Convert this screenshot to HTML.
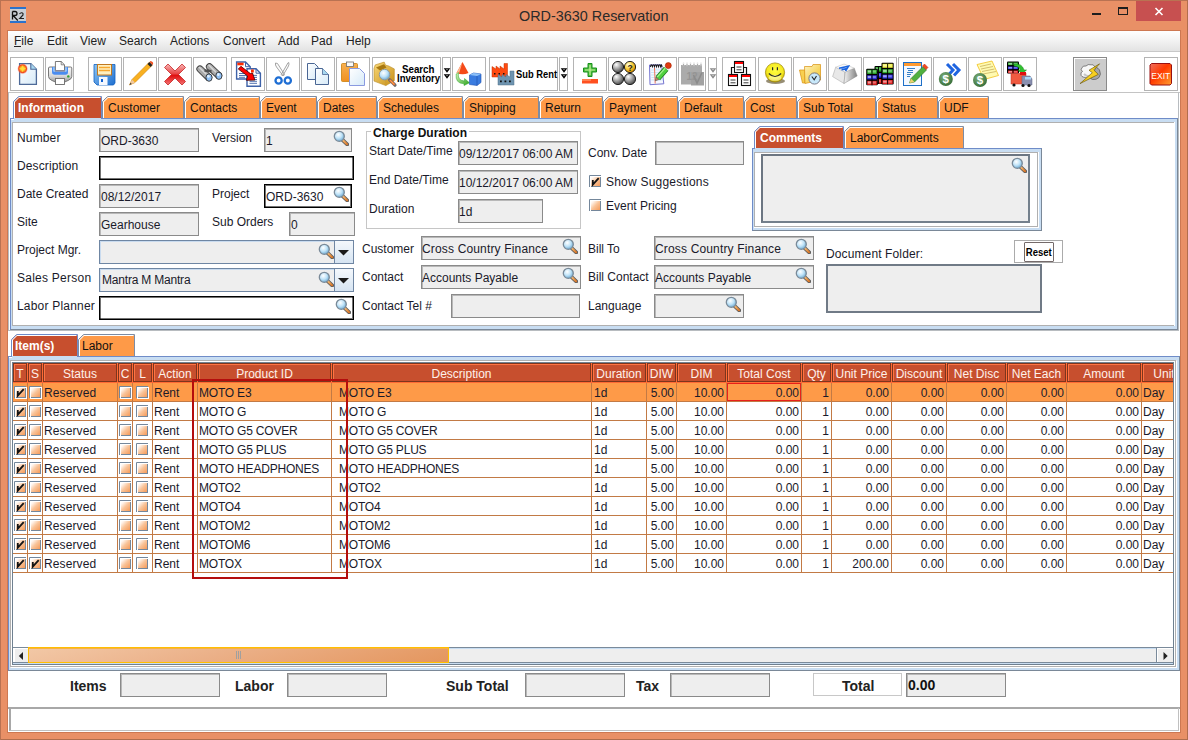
<!DOCTYPE html><html><head><meta charset="utf-8"><title>ORD-3630 Reservation</title><style>
*{box-sizing:border-box;margin:0;padding:0}
html,body{width:1188px;height:740px;overflow:hidden;background:#E99066;font-family:"Liberation Sans",sans-serif;font-size:12px;color:#1a1a2a}
.a{position:absolute}
.t{position:absolute;white-space:nowrap;line-height:14px}
.fld{position:absolute;background:#EEEEEE;border:1px solid #8A8A8A;box-shadow:inset 1px 1px 0 #B8B8B8}
.fldw{position:absolute;background:#fff;border:1px solid #000;box-shadow:inset 1px 1px 0 rgba(0,0,0,.55),inset -1px -1px 0 rgba(0,0,0,.55)}
.tb{position:absolute;top:57px;height:34px;border:1px solid #B4B4B4;background:#fff}
.tab{position:absolute;height:22px;background:#FE9A48;border:1px solid #7C98C8;border-bottom:none;clip-path:polygon(5px 0,100% 0,100% 100%,0 100%,0 5px)}
.tabs{background:#C74F2E;color:#fff;font-weight:bold}
.mag{position:absolute;width:16px;height:16px}
.cb{position:absolute;width:12px;height:12px;border:1px solid #6F7F95;background:linear-gradient(135deg,#fff 0%,#F8D2B4 45%,#F08A44 100%)}
.hd{position:absolute;top:363px;height:19px;background:#C74F2E;color:#FFEFE6;text-align:center;line-height:19px;font-size:12px;box-shadow:inset 1px 1px 0 #F07A4A,inset -1px -1px 0 #F07A4A;border-right:1px solid #A23A1E}
</style></head><body>
<svg width="0" height="0" style="position:absolute"><defs><linearGradient id="cbg" x1="0" y1="0" x2="1" y2="1"><stop offset="0" stop-color="#FFFFFF"/><stop offset="0.15" stop-color="#FFF4EC"/><stop offset="0.5" stop-color="#F9C49A"/><stop offset="1" stop-color="#F69A58"/></linearGradient></defs></svg>
<div class="a" style="left:0;top:0;width:1188px;height:1px;background:#B97252"></div>
<div class="a" style="left:0;top:739px;width:1188px;height:1px;background:#B06E4E"></div>
<div class="a" style="left:0;top:0;width:1px;height:740px;background:#B97252"></div>
<div class="a" style="left:1187px;top:0;width:1px;height:740px;background:#B06E4E"></div>
<svg class="a" style="left:10px;top:7px" width="16" height="16"><rect width="16" height="16" fill="#CACED4"/><rect width="16" height="2" fill="#2A72CC"/><rect y="14" width="16" height="2" fill="#2A72CC"/><path d="M2.5 4.5 V12.5 M2.5 4.5 H5 Q7 4.5 7 6.5 Q7 8.5 5 8.5 H3 L7.8 13.5" fill="none" stroke="#111" stroke-width="1.3"/><path d="M9.5 7 Q10.5 5.5 12 5.8 Q13.5 6.3 13 8 L9.8 11.5 H14" fill="none" stroke="#222" stroke-width="1.2"/></svg>
<div class="t" style="left:519px;top:7px;font-size:14.4px;line-height:18px;color:#2A2A2A">ORD-3630 Reservation</div>
<div class="a" style="left:1092px;top:13px;width:9px;height:2px;background:#1E1E1E"></div>
<div class="a" style="left:1118px;top:7px;width:10px;height:8px;border:1px solid #1E1E1E;border-top-width:2px"></div>
<div class="a" style="left:1136px;top:1px;width:45px;height:20px;background:#C75050"></div>
<svg class="a" style="left:1152px;top:5px" width="14" height="12"><path d="M3.5 3 L10.5 10 M10.5 3 L3.5 10" stroke="#fff" stroke-width="1.6"/></svg>
<div class="a" style="left:7px;top:30px;width:1174px;height:703px;background:#CD7852"></div>
<div class="a" style="left:8px;top:31px;width:1172px;height:701px;background:#fff"></div>
<div class="a" style="left:8px;top:31px;width:1172px;height:20px;background:linear-gradient(#FFFFFF,#F2F2F2 50%,#E3E3E3)"></div>
<div class="a" style="left:8px;top:51px;width:1172px;height:1px;background:#C8C8C8"></div>
<div class="t" style="left:14px;top:34px;font-size:12px;color:#222">File</div>
<div class="t" style="left:47px;top:34px;font-size:12px;color:#222">Edit</div>
<div class="t" style="left:80px;top:34px;font-size:12px;color:#222">View</div>
<div class="t" style="left:119px;top:34px;font-size:12px;color:#222">Search</div>
<div class="t" style="left:170px;top:34px;font-size:12px;color:#222">Actions</div>
<div class="t" style="left:223px;top:34px;font-size:12px;color:#222">Convert</div>
<div class="t" style="left:278px;top:34px;font-size:12px;color:#222">Add</div>
<div class="t" style="left:311px;top:34px;font-size:12px;color:#222">Pad</div>
<div class="t" style="left:346px;top:34px;font-size:12px;color:#222">Help</div>
<div class="a" style="left:14px;top:46px;width:7px;height:1px;background:#222"></div>
<div class="tb" style="left:10px;width:34px"></div>
<div class="tb" style="left:45px;width:29px"></div>
<div class="tb" style="left:88px;width:34px"></div>
<div class="tb" style="left:123px;width:34px"></div>
<div class="tb" style="left:158px;width:34px"></div>
<div class="tb" style="left:193px;width:34px"></div>
<div class="tb" style="left:231px;width:34px"></div>
<div class="tb" style="left:266px;width:34px"></div>
<div class="tb" style="left:301px;width:34px"></div>
<div class="tb" style="left:336px;width:34px"></div>
<div class="tb" style="left:372px;width:69px"></div>
<div class="tb" style="left:442px;width:9px"></div>
<div class="tb" style="left:452px;width:34px"></div>
<div class="tb" style="left:489px;width:69px"></div>
<div class="tb" style="left:559px;width:9px"></div>
<div class="tb" style="left:573px;width:34px"></div>
<div class="tb" style="left:608px;width:34px"></div>
<div class="tb" style="left:643px;width:34px"></div>
<div class="tb" style="left:678px;width:28px"></div>
<div class="tb" style="left:708px;width:9px"></div>
<div class="tb" style="left:722px;width:34px"></div>
<div class="tb" style="left:758px;width:34px"></div>
<div class="tb" style="left:793px;width:34px"></div>
<div class="tb" style="left:828px;width:34px"></div>
<div class="tb" style="left:863px;width:34px"></div>
<div class="tb" style="left:898px;width:34px"></div>
<div class="tb" style="left:933px;width:34px"></div>
<div class="tb" style="left:968px;width:34px"></div>
<div class="tb" style="left:1003px;width:34px"></div>
<div class="tb" style="left:1144px;width:34px"></div>
<div class="tb" style="left:1073px;width:34px;background:#CCCCCC;border-color:#8A8A8A;box-shadow:inset 1px 1px 0 #fff"></div>
<div class="a" style="left:8px;top:92px;width:1172px;height:1px;background:#C4C4C4"></div>
<svg class="a" style="left:0;top:0" width="1188" height="95" viewBox="0 0 1188 95">
<defs>
<linearGradient id="pg" x1="0" y1="0" x2="1" y2="1"><stop offset="0" stop-color="#FFFFFF"/><stop offset="1" stop-color="#D6EAF8"/></linearGradient>
<radialGradient id="sun" cx="0.5" cy="0.5" r="0.5"><stop offset="0" stop-color="#FFE040"/><stop offset="0.45" stop-color="#FFB020"/><stop offset="0.75" stop-color="#F04A20"/><stop offset="1" stop-color="#F86040" stop-opacity="0.2"/></radialGradient>
<linearGradient id="gray" x1="0" y1="0" x2="0" y2="1"><stop offset="0" stop-color="#FAFAFA"/><stop offset="0.6" stop-color="#D8D8D8"/><stop offset="1" stop-color="#9A9A9A"/></linearGradient>
<linearGradient id="blu" x1="0" y1="0" x2="1" y2="1"><stop offset="0" stop-color="#8EC6F4"/><stop offset="1" stop-color="#1E6FD0"/></linearGradient>
<linearGradient id="redx" x1="0" y1="0" x2="0" y2="1"><stop offset="0" stop-color="#F8B8B8"/><stop offset="0.45" stop-color="#E84848"/><stop offset="0.55" stop-color="#E01010"/><stop offset="1" stop-color="#F47878"/></linearGradient>
<radialGradient id="ball" cx="0.35" cy="0.3" r="0.7"><stop offset="0" stop-color="#FFFFFF"/><stop offset="0.5" stop-color="#A8A8A8"/><stop offset="1" stop-color="#505050"/></radialGradient>
<radialGradient id="ballY" cx="0.35" cy="0.3" r="0.7"><stop offset="0" stop-color="#FFFFE0"/><stop offset="0.5" stop-color="#F8D040"/><stop offset="1" stop-color="#D89000"/></radialGradient>
<radialGradient id="smile" cx="0.5" cy="0.4" r="0.6"><stop offset="0" stop-color="#FFFF40"/><stop offset="0.7" stop-color="#F4E820"/><stop offset="1" stop-color="#C0A400"/></radialGradient>
<linearGradient id="gold" x1="0" y1="0" x2="1" y2="1"><stop offset="0" stop-color="#F8D878"/><stop offset="1" stop-color="#C89018"/></linearGradient>
<linearGradient id="grn" x1="0" y1="0" x2="1" y2="1"><stop offset="0" stop-color="#D8F8C0"/><stop offset="1" stop-color="#28A018"/></linearGradient>
<radialGradient id="coin" cx="0.4" cy="0.35" r="0.65"><stop offset="0" stop-color="#7DB07D"/><stop offset="1" stop-color="#3A703A"/></radialGradient>
<linearGradient id="exitg" x1="0" y1="0" x2="1" y2="1"><stop offset="0" stop-color="#F07060"/><stop offset="0.45" stop-color="#FF3A00"/><stop offset="1" stop-color="#FFA030"/></linearGradient>
<linearGradient id="keyR" x1="0" y1="0" x2="1" y2="0"><stop offset="0" stop-color="#F4F4F4"/><stop offset="1" stop-color="#808080"/></linearGradient>
<linearGradient id="key" x1="0" y1="0" x2="1" y2="1"><stop offset="0" stop-color="#FFFFFF"/><stop offset="0.6" stop-color="#DADADA"/><stop offset="1" stop-color="#8C8C8C"/></linearGradient>
<linearGradient id="fold" x1="0" y1="0" x2="1" y2="1"><stop offset="0" stop-color="#FFF4C0"/><stop offset="1" stop-color="#F0C020"/></linearGradient>
<linearGradient id="clip" x1="0" y1="0" x2="0" y2="1"><stop offset="0" stop-color="#F8B050"/><stop offset="1" stop-color="#F09020"/></linearGradient>
</defs>
<path d="M19.6 63.6 H30.8 L36.4 69.2 V84.4 H19.6Z" fill="url(#pg)" stroke="#4E6A98" stroke-width="1.3"/>
<path d="M30.8 63.6 V69.2 H36.4" fill="#A8D8F0" stroke="#4E6A98" stroke-width="1.1"/>
<circle cx="22.6" cy="68.7" r="5.2" fill="url(#sun)"/>
<path d="M22.6 65.2 L23.6 67.6 L26.1 68.7 L23.6 69.8 L22.6 72.2 L21.6 69.8 L19.1 68.7 L21.6 67.6Z" fill="#FFE040" opacity="0.9"/>
<path d="M48.5 68 Q48.5 67 50 67 H70.5 Q71.8 67 71.8 68 V76.5 Q71.8 79 68 80.5 L64.7 82 H55.3 L52 80.5 Q48.5 79 48.5 76.5Z" fill="url(#gray)" stroke="#6A6A6A" stroke-width="0.9"/>
<path d="M52 67 H68 V72 Q68 74.8 65.5 74.8 H54.5 Q52 74.8 52 72Z" fill="#4A8CF0"/>
<path d="M53 67.2 H67 V70.5 Q67 72 65 72 H55 Q53 72 53 70.5Z" fill="#8EC0FA"/>
<path d="M55.4 61.5 H61.2 L64.5 64.8 V70.6 H55.4Z" fill="#fff" stroke="#6A6A6A" stroke-width="0.9"/>
<path d="M61.2 61.5 V64.8 H64.5" fill="none" stroke="#6A6A6A" stroke-width="0.8"/>
<rect x="55" y="70" width="10" height="1.6" fill="#8A8898"/>
<rect x="55.5" y="78.5" width="9" height="6" fill="#fff" stroke="#6A6A6A" stroke-width="0.9"/>
<circle cx="68.3" cy="76.4" r="1.2" fill="#30A030"/>
<path d="M94 64.5 H115 V83 L113.5 85 H97 L94 82Z" fill="url(#blu)" stroke="#1060C0" stroke-width="0.8"/>
<rect x="97.5" y="64.5" width="14" height="10.5" fill="#FFF0C0" stroke="#C07820" stroke-width="1"/>
<path d="M99 67.5 H110 M99 70.5 H110" stroke="#F8A830" stroke-width="1.4"/>
<rect x="99" y="77" width="8.5" height="8" fill="#F4F8FF"/>
<rect x="101" y="79" width="2" height="3" fill="#1060D0"/>
<path d="M129.5 85 L132 79.5 L149 62.5 L152 65.5 L135 82.5Z" fill="#F8B020" stroke="#D08000" stroke-width="0.6"/>
<path d="M129.5 85 L132 79.5 L135 82.5Z" fill="#F0C8A0"/><path d="M129.5 85 L130.5 82.8 L131.8 84Z" fill="#333"/>
<path d="M147.5 64 L149.5 62 L152.5 65 L150.5 67Z" fill="#222"/><path d="M149.5 62 L150.5 61 Q152 61 153 62.5 Q153.5 64 152.5 65Z" fill="#F05020"/>
<path d="M168 64 L175 71 L182 64 L185.5 67.5 L178.5 74.5 L185.5 81.5 L182 85 L175 78 L168 85 L164.5 81.5 L171.5 74.5 L164.5 67.5Z" fill="url(#redx)" stroke="#C01010" stroke-width="0.7"/>
<path d="M200 69 L208.5 77.3 M209.5 66.8 L218.5 75.3" stroke="#3A3A3A" stroke-width="7.2" stroke-linecap="round"/>
<path d="M200 69 L208.5 77.3 M209.5 66.8 L218.5 75.3" stroke="#A8A8A8" stroke-width="5.4" stroke-linecap="round"/>
<path d="M199.5 67.5 L206 74 M209 65.3 L215.5 71.8" stroke="#D8D8D8" stroke-width="1.6" stroke-linecap="round"/>
<path d="M204.5 70.5 L211.5 71.2" stroke="#505050" stroke-width="2.4"/>
<ellipse cx="209" cy="77.6" rx="3.1" ry="3.7" fill="#90C0F4" stroke="#333" stroke-width="0.9"/>
<ellipse cx="218.9" cy="75.8" rx="3.1" ry="3.6" fill="#90C0F4" stroke="#333" stroke-width="0.9"/>
<ellipse cx="208.4" cy="76.3" rx="1.3" ry="1.5" fill="#E0F0FF"/><ellipse cx="218.3" cy="74.5" rx="1.3" ry="1.5" fill="#E0F0FF"/>
<path d="M236.6 62 H245.5 L250.2 66.7 V79 H236.6Z" fill="#fff" stroke="#3E62A8" stroke-width="1.4"/>
<path d="M245.5 62 V66.7 H250.2" fill="none" stroke="#3E62A8" stroke-width="1"/>
<rect x="237.3" y="62.7" width="6.3" height="2.6" fill="#FF2A00"/>
<path d="M239 73.5 H246 M239 75.5 H246 M239 77.3 H245" stroke="#3E62A8" stroke-width="0.9"/>
<path d="M247 68.8 H256 L260.4 73.2 V86.2 H247Z" fill="#fff" stroke="#3E62A8" stroke-width="1.4"/>
<path d="M256 68.8 V73.2 H260.4" fill="none" stroke="#3E62A8" stroke-width="1"/>
<rect x="251" y="69.5" width="2.8" height="3" fill="#FF2A00"/>
<path d="M249.5 75.4 H257 M249.5 77.4 H257 M249.5 79.5 H257 M249.5 81.3 H257 M249.5 83.3 H257" stroke="#3E62A8" stroke-width="0.9"/>
<path d="M240.9 66.3 L250.4 73.6 L252.5 73 L254.9 80.1 L246.4 80.3 L247.6 76 L238.3 69.1Z" fill="#FF0000" stroke="#400000" stroke-width="0.8" stroke-linejoin="round"/>
<path d="M275.5 63 Q275 65 276.5 67 L283.3 76 L284.5 74.5 L277.5 63.5Z M288.8 62.6 Q289.5 64.5 288 67 L282.5 76 L281.3 74.5 L288 62.8Z" fill="#FBFBFB" stroke="#9A9A9A" stroke-width="0.9"/>
<circle cx="278.6" cy="80.5" r="3.1" fill="none" stroke="#1E6ED4" stroke-width="2.3"/>
<circle cx="287.8" cy="80.5" r="3.1" fill="none" stroke="#1E6ED4" stroke-width="2.3"/>
<path d="M307.5 63.5 H314.5 L318 67 V79.5 H307.5Z" fill="url(#pg)" stroke="#4A6694" stroke-width="1"/>
<path d="M315.5 68.5 H322.5 L328.5 74.5 V84.5 H315.5Z" fill="url(#pg)" stroke="#4A6694" stroke-width="1"/>
<path d="M322.5 68.5 V74.5 H328.5" fill="#A8D8F0" stroke="#4A6694" stroke-width="0.8"/>
<rect x="341.5" y="63.5" width="16" height="18" rx="1" fill="url(#clip)" stroke="#C88010" stroke-width="0.8"/>
<rect x="346.5" y="62" width="7" height="4.5" fill="#FAFAFA" stroke="#6E6E6E" stroke-width="0.8"/>
<path d="M349.5 68.5 H359.5 L364.5 73.5 V85.5 H349.5Z" fill="url(#pg)" stroke="#8A9AE0" stroke-width="1"/>
<path d="M374 68.5 L375.2 64.9 L384.2 62.1 L385.5 65.2 L388.6 65.9 L394.3 68.9 V80.7 L385.8 85.6 L374 81.1Z" fill="url(#gold)" stroke="#B88A20" stroke-width="0.6"/>
<path d="M376 67.5 L384 64.3 L386.5 67.5 L380 70.5Z" fill="#A87810"/>
<path d="M385.8 72 V85.6" stroke="#C89830" stroke-width="0.6"/>
<path d="M389.5 79.6 L395 85.2" stroke="#6E6E6E" stroke-width="3.2" stroke-linecap="round"/><path d="M389.8 79.9 L394.6 84.8" stroke="#F46A30" stroke-width="2"/><path d="M390.2 80.3 L394.2 84.4" stroke="#F8D060" stroke-width="0.7"/>
<circle cx="384.6" cy="74.6" r="5.3" fill="url(#lens)" stroke="#8A96A0" stroke-width="0.9"/>
<text x="402" y="72.5" font-family="Liberation Sans" font-weight="bold" font-size="11" fill="#000" textLength="32.5" lengthAdjust="spacingAndGlyphs">Search</text>
<text x="397" y="82" font-family="Liberation Sans" font-weight="bold" font-size="11" fill="#000" textLength="43" lengthAdjust="spacingAndGlyphs">Inventory</text>
<path d="M443.7 68.3 H450.3 L447 72.8Z M443.7 74.3 H450.3 L447 78.8Z" fill="#000"/><path d="M446.5 69.6 H447.5 M446.5 75.6 H447.5" stroke="#fff" stroke-width="0.9"/>
<path d="M462.5 62 L468.5 73 Q462.5 75.5 456.5 73Z" fill="#F44A1A"/><path d="M462.5 62 L459 73.5 Q457 73.5 456.5 73Z" fill="#FFB890"/>
<path d="M458.5 72.5 Q457 80.5 464.5 81 L464.5 78.5 L469.5 82.8 L464 85.5 L464 83.8 Q455 83.5 456.2 74Z" fill="url(#grn)" stroke="#28A028" stroke-width="0.5"/>
<path d="M469.5 75 L473.5 73 L481 74 V82.5 L477 85.5 L469.5 84.5Z" fill="#3A7CE0" stroke="#2050B0" stroke-width="0.6"/>
<path d="M469.5 75 L473.5 73 L481 74 L477 76Z" fill="#8CC0F8"/><path d="M477 76 V85.5" stroke="#1C4CA8" stroke-width="0.6"/>
<path d="M492 66.5 L496 69 V66 L500 69 V66 L504 69 V63.5 H507.5 V77 H492Z" fill="#FF4A10" stroke="#C03000" stroke-width="0.5"/>
<path d="M494 73 h1.5 v1.5 h-1.5z M498.5 73 h1.5 v1.5 h-1.5z M503 73 h1.5 v1.5 h-1.5z" fill="#111"/>
<path d="M498 74.5 L502 77 V74.5 L506 77 V74.5 L510 77 V71 H514 V85 H498Z" fill="#6E94B0" stroke="#50708A" stroke-width="0.5"/>
<path d="M500 80.5 h1.8 v1.8 h-1.8z M504.5 80.5 h1.8 v1.8 h-1.8z M509 80.5 h1.8 v1.8 h-1.8z" fill="#111"/>
<text x="516" y="77.8" font-family="Liberation Sans" font-weight="bold" font-size="11" fill="#000" textLength="41" lengthAdjust="spacingAndGlyphs">Sub Rent</text>
<path d="M560.7 68.3 H567.3 L564 72.8Z M560.7 74.3 H567.3 L564 78.8Z" fill="#000"/><path d="M563.5 69.6 H564.5 M563.5 75.6 H564.5" stroke="#fff" stroke-width="0.9"/>
<path d="M588 63.5 H592 V68 H596.5 V72 H592 V76.5 H588 V72 H583.5 V68 H588Z" fill="#50C040" stroke="#18901C" stroke-width="1"/>
<path d="M590 65 V75 M585 70 H595" stroke="#C8F0A0" stroke-width="1.2"/>
<rect x="582" y="79" width="16" height="4.5" fill="#FF5020"/><rect x="582" y="79" width="9" height="2" fill="#FF8050"/>
<circle cx="618" cy="67" r="5.6" fill="url(#ball)" stroke="#111" stroke-width="0.9"/>
<circle cx="630" cy="67" r="5.6" fill="url(#ballY)" stroke="#111" stroke-width="0.9"/>
<circle cx="618" cy="79" r="5.6" fill="url(#ball)" stroke="#111" stroke-width="0.9"/>
<circle cx="630" cy="79" r="5.6" fill="url(#ball)" stroke="#111" stroke-width="0.9"/>
<text x="630" y="70.5" text-anchor="middle" font-family="Liberation Sans" font-weight="bold" font-size="8.5" fill="#222">?</text>
<path d="M649.5 65 L661.5 64.8 L663.8 83.8 L650 84.7Z" fill="#F6F8FF" stroke="#7474D0" stroke-width="1"/>
<path d="M651 70 L662 69.8 M651 72.5 L662.3 72.3 M651 75 L662.6 74.8 M651.3 77.5 L662.9 77.3 M651.3 80 L663.2 79.8" stroke="#B8E0F4" stroke-width="0.7"/>
<path d="M654.5 68 L655.2 83.5" stroke="#F06848" stroke-width="0.9"/>
<path d="M650.5 67 Q651 63 652.5 66.5 Q653.5 63 654.5 66.5 Q655.5 63 656.5 66.5 Q657.5 63 658.5 66.5 Q659.5 63 660.5 66.5 Q661.5 63 662 67" fill="none" stroke="#1A1A1A" stroke-width="1.1"/>
<path d="M657.8 78.2 L666.2 68.8" stroke="#1E7A1E" stroke-width="6" stroke-linecap="butt"/>
<path d="M657.8 78.2 L666.2 68.8" stroke="#50D040" stroke-width="4.4"/>
<path d="M657.2 77.2 L665.2 68.2" stroke="#A8F090" stroke-width="1.2"/>
<path d="M655.4 80.8 L656 77 L658.8 79.6Z" fill="#C89060" stroke="#333" stroke-width="0.5"/>
<path d="M666 68.6 L667.6 67" stroke="#E8E8E8" stroke-width="5"/>
<circle cx="668.3" cy="65.6" r="3" fill="#E03A10" stroke="#A02000" stroke-width="0.6"/>
<path d="M681 65 H702 V84.5 H681Z" fill="#ABABAB"/>
<rect x="691" y="72" width="13" height="13.5" fill="#A2A2A2"/>
<path d="M683.5 65.5 V63 M687 65.5 V63 M690.5 65.5 V63 M694 65.5 V63 M697.5 65.5 V63 M701 65.5 V63" stroke="#E4E4E4" stroke-width="1.5" stroke-linecap="round"/>
<path d="M683.5 66 V64 M687 66 V64 M690.5 66 V64 M694 66 V64 M697.5 66 V64 M701 66 V64" stroke="#8A8A8A" stroke-width="0.6"/>
<text x="692" y="79.5" text-anchor="middle" font-family="Liberation Sans" font-weight="bold" font-size="10" fill="#959595">12</text>
<path d="M693.5 75 L697 83 L702 72.5" stroke="#8C8C8C" stroke-width="1.6" fill="none"/>
<path d="M709.7 68.3 H716.3 L713 72.8Z M709.7 74.3 H716.3 L713 78.8Z" fill="#8A8A8A"/><path d="M712.5 69.6 H713.5 M712.5 75.6 H713.5" stroke="#fff" stroke-width="0.9"/>
<path d="M731.5 74 V67.5 H746.5 V74" fill="none" stroke="#111" stroke-width="1.2"/>
<rect x="734.5" y="61.5" width="9" height="11" fill="#fff" stroke="#111" stroke-width="1.1"/>
<rect x="735.0" y="62.0" width="8" height="2" fill="#FF0000"/>
<path d="M736.5 67.0 H741.5 M736.5 69.8 H741.5" stroke="#222" stroke-width="0.9"/>
<rect x="728.5" y="74.5" width="9" height="11" fill="#fff" stroke="#111" stroke-width="1.1"/>
<rect x="729.0" y="75.0" width="8" height="2" fill="#FF0000"/>
<path d="M730.5 80.0 H735.5 M730.5 82.8 H735.5" stroke="#222" stroke-width="0.9"/>
<rect x="741.5" y="74.5" width="9" height="11" fill="#fff" stroke="#111" stroke-width="1.1"/>
<rect x="742.0" y="75.0" width="8" height="2" fill="#FF0000"/>
<path d="M743.5 80.0 H748.5 M743.5 82.8 H748.5" stroke="#222" stroke-width="0.9"/>
<ellipse cx="775.5" cy="81" rx="9.5" ry="3" fill="#403000" opacity="0.55"/>
<circle cx="775" cy="72.5" r="9.6" fill="url(#smile)" stroke="#9A8400" stroke-width="0.7"/>
<ellipse cx="775" cy="77.8" rx="6.5" ry="3" fill="#FFFFD0" opacity="0.55"/>
<path d="M772.6 67.3 V70.3 M777.4 67.3 V70.3" stroke="#2A2A2A" stroke-width="1.2"/>
<path d="M768.8 73.5 Q775 79.5 781.2 73.5" fill="none" stroke="#2A2A2A" stroke-width="1.1"/>
<path d="M799.5 70 H805 V83 L802.5 83Z" fill="#F8D050" stroke="#D89010" stroke-width="0.7"/>
<path d="M804.5 66.5 H812 L813 64.5 H820.5 V80 L805 83.5Z" fill="url(#fold)" stroke="#D89010" stroke-width="0.7"/>
<circle cx="814.5" cy="78.5" r="5.6" fill="#C8E8FA" stroke="#6E6E7E" stroke-width="0.9"/>
<path d="M811.8 76.5 L814.2 79.8 L816.5 76" fill="none" stroke="#222" stroke-width="1.1"/>
<path d="M835.7 67.2 L832.6 76.6 L844 83.5 L845.1 72.1Z" fill="#E8E8E8" stroke="#A0A0A0" stroke-width="0.5"/>
<path d="M845.1 72.1 L844 83.5 L857.2 75.9 L854.2 68.1Z" fill="url(#keyR)" stroke="#8A8A8A" stroke-width="0.5"/>
<path d="M835.7 67.2 L844 64 L854.2 68.1 L845.1 72.1Z" fill="#FAFAFA" stroke="#B8B8B8" stroke-width="0.5"/>
<path d="M839 68.3 L848.5 66.2 L845.5 71 M841.5 69.6 L847.5 68.6" fill="none" stroke="#1A64E0" stroke-width="1.6"/>
<rect x="874.5" y="66" width="8" height="18" rx="1" fill="#000"/><rect x="875.5" y="67" width="6" height="4.6" fill="#28A828"/><rect x="876.1" y="67.6" width="1.5" height="2.4" fill="#fff" opacity="0.55"/><rect x="879.1" y="67.6" width="1.5" height="2.4" fill="#fff" opacity="0.35"/><rect x="875.5" y="73" width="6" height="4.6" fill="#2828E8"/><rect x="876.1" y="73.6" width="1.5" height="2.4" fill="#fff" opacity="0.55"/><rect x="879.1" y="73.6" width="1.5" height="2.4" fill="#fff" opacity="0.35"/><rect x="875.5" y="79" width="6" height="4.6" fill="#E02020"/><rect x="876.1" y="79.6" width="1.5" height="2.4" fill="#fff" opacity="0.55"/><rect x="879.1" y="79.6" width="1.5" height="2.4" fill="#fff" opacity="0.35"/><path d="M878.5 67 V84" stroke="#000" stroke-width="0.9"/>
<rect x="881.5" y="62.8" width="12.2" height="21.6" rx="1" fill="#000"/><rect x="882.5" y="63.8" width="10.2" height="4.0" fill="#F0F040"/><rect x="883.1" y="64.39999999999999" width="3.5999999999999996" height="2.1" fill="#fff" opacity="0.55"/><rect x="888.2" y="64.39999999999999" width="3.5999999999999996" height="2.1" fill="#fff" opacity="0.35"/><rect x="882.5" y="69.2" width="10.2" height="4.0" fill="#30B030"/><rect x="883.1" y="69.8" width="3.5999999999999996" height="2.1" fill="#fff" opacity="0.55"/><rect x="888.2" y="69.8" width="3.5999999999999996" height="2.1" fill="#fff" opacity="0.35"/><rect x="882.5" y="74.6" width="10.2" height="4.0" fill="#3030E0"/><rect x="883.1" y="75.19999999999999" width="3.5999999999999996" height="2.1" fill="#fff" opacity="0.55"/><rect x="888.2" y="75.19999999999999" width="3.5999999999999996" height="2.1" fill="#fff" opacity="0.35"/><rect x="882.5" y="80.0" width="10.2" height="4.0" fill="#E02020"/><rect x="883.1" y="80.6" width="3.5999999999999996" height="2.1" fill="#fff" opacity="0.55"/><rect x="888.2" y="80.6" width="3.5999999999999996" height="2.1" fill="#fff" opacity="0.35"/><path d="M887.6 63.8 V84.4" stroke="#000" stroke-width="0.9"/>
<rect x="866.2" y="68.8" width="11.6" height="16.5" rx="1" fill="#000"/><rect x="867.2" y="69.8" width="9.6" height="4.1" fill="#30B030"/><rect x="867.8000000000001" y="70.39999999999999" width="3.3" height="2.15" fill="#fff" opacity="0.55"/><rect x="872.6" y="70.39999999999999" width="3.3" height="2.15" fill="#fff" opacity="0.35"/><rect x="867.2" y="75.3" width="9.6" height="4.1" fill="#3030E0"/><rect x="867.8000000000001" y="75.89999999999999" width="3.3" height="2.15" fill="#fff" opacity="0.55"/><rect x="872.6" y="75.89999999999999" width="3.3" height="2.15" fill="#fff" opacity="0.35"/><rect x="867.2" y="80.8" width="9.6" height="4.1" fill="#E02020"/><rect x="867.8000000000001" y="81.39999999999999" width="3.3" height="2.15" fill="#fff" opacity="0.55"/><rect x="872.6" y="81.39999999999999" width="3.3" height="2.15" fill="#fff" opacity="0.35"/><path d="M872.0 69.8 V85.3" stroke="#000" stroke-width="0.9"/>
<rect x="903.5" y="62.5" width="18" height="23" fill="#F4F8FF" stroke="#1E70C8" stroke-width="1"/>
<rect x="904" y="63" width="17" height="3" fill="#FF9A30"/>
<path d="M907 68.5 H915 M908 70.5 H913 M907 72.5 H913 M907 74.5 H911 M907 76.5 H910" stroke="#2070C0" stroke-width="0.9"/>
<path d="M909.5 83 L911 78.5 L923 66.5 L926.5 70 L914.5 82Z" fill="#50B040" stroke="#287020" stroke-width="0.6"/>
<path d="M909.5 83 L911 78.5 L914.5 82Z" fill="#F0D070"/><path d="M922.5 66 L924.5 64 L928 67.5 L926 69.5Z" fill="#F04A20" stroke="#C02000" stroke-width="0.5"/>
<path d="M947 64 L953 70 L948 75.5 M953 64 L959 70 L954 75.5" fill="none" stroke="#1E64E0" stroke-width="3"/>
<circle cx="945.8" cy="79" r="7" fill="url(#coin)"/><text x="945.8" y="83.2" text-anchor="middle" font-family="Liberation Sans" font-weight="bold" font-size="11.5" fill="#fff">$</text>
<path d="M977 64.5 L992 61 L998.5 75.5 L984 79.5Z" fill="#FFFAB0" stroke="#F0C020" stroke-width="0.8"/>
<path d="M980 66.5 L991 64 M981 69 L993 66.5 M982 71.5 L994.5 69 M983 74 L996 71.5" stroke="#C8B060" stroke-width="0.8"/>
<circle cx="980" cy="80" r="7" fill="url(#coin)"/><text x="980" y="84.2" text-anchor="middle" font-family="Liberation Sans" font-weight="bold" font-size="11.5" fill="#fff">$</text>
<rect x="1007" y="61.5" width="12" height="12" rx="1" fill="#000"/><rect x="1008" y="62.5" width="10" height="2.6" fill="#30B030"/><rect x="1008.6" y="63.1" width="3.5" height="1.4" fill="#fff" opacity="0.55"/><rect x="1013.6" y="63.1" width="3.5" height="1.4" fill="#fff" opacity="0.35"/><rect x="1008" y="66.5" width="10" height="2.6" fill="#3030E0"/><rect x="1008.6" y="67.1" width="3.5" height="1.4" fill="#fff" opacity="0.55"/><rect x="1013.6" y="67.1" width="3.5" height="1.4" fill="#fff" opacity="0.35"/><rect x="1008" y="70.5" width="10" height="2.6" fill="#E02020"/><rect x="1008.6" y="71.1" width="3.5" height="1.4" fill="#fff" opacity="0.55"/><rect x="1013.6" y="71.1" width="3.5" height="1.4" fill="#fff" opacity="0.35"/><path d="M1013.0 62.5 V73.5" stroke="#000" stroke-width="0.9"/>
<path d="M1014 64 Q1022 63 1024 70 L1026.5 70 L1022 74 L1018 70 L1020.5 70 Q1019 66 1014 66Z" fill="#30C030" stroke="#108010" stroke-width="0.5"/>
<rect x="1011" y="73.5" width="15" height="10.5" fill="#F05A40" stroke="#C03020" stroke-width="0.5"/>
<rect x="1020" y="72" width="6" height="3" fill="#E01010"/>
<path d="M1022 76 H1030 L1032 79 V85 H1022Z" fill="#8A90B0" stroke="#5A6080" stroke-width="0.5"/><rect x="1025" y="77" width="6" height="2.5" fill="#A8D8F8"/>
<circle cx="1014" cy="85" r="1.6" fill="#111"/><circle cx="1023" cy="85.5" r="1.6" fill="#111"/><circle cx="1029" cy="85.5" r="1.6" fill="#111"/>
<path d="M1092 68 Q1097 66 1099.5 70 Q1101.5 74.5 1099 77.5 Q1096.5 80 1092.5 79.5 Q1090 79 1090 76Z" fill="#A8A8A8" stroke="#505050" stroke-width="0.7"/>
<path d="M1082.5 71.5 Q1080 70 1082 67.5 Q1083.5 65.5 1086 66 Q1088 63.8 1091 64.8 Q1093.5 64 1094.5 66.5 Q1096 69 1094 72 Q1095 76.5 1091 77.5 Q1088 79.5 1085.5 77.5 Q1080.5 77 1081 74 Q1080.5 72.5 1082.5 71.5Z" fill="#F8F8F8" stroke="#555" stroke-width="0.7"/>
<path d="M1084 74 Q1088 78 1093 75" fill="none" stroke="#C8C8C8" stroke-width="2"/>
<path d="M1099.6 63.8 L1093.8 70 L1098.3 74.4 L1080 83.6 L1092.3 72.7 L1089 70.2Z" fill="#F8D020" stroke="#5A4A00" stroke-width="0.6" stroke-linejoin="round"/>
<path d="M1151.5 63.5 H1170 L1171.5 65 V83.5 L1170 85 H1151.5 L1150 83.5 V65Z" fill="url(#exitg)" stroke="#9A1010" stroke-width="1"/>
<text x="1160.8" y="78.5" text-anchor="middle" font-family="Liberation Sans" font-size="9.5" fill="#fff" textLength="19" lengthAdjust="spacingAndGlyphs">EXIT</text>
</svg>
<div class="a" style="left:8px;top:92px;width:1171px;height:239px;border:1px solid #B8BCC0;border-top-color:#C4C4C4;background:#fff"></div>
<svg class="a" style="left:13px;top:96px" width="89" height="23"><path d="M1 23 V6 L6 1 H88 V23Z" fill="#C74F2E"/><path d="M1.5 23 V6 L6 1.5 H87.5" fill="none" stroke="#fff" stroke-width="1"/><path d="M0.5 23 V5.5 L5.5 0.5 H88.5 V23" fill="none" stroke="#6F8CC8" stroke-width="1"/></svg><div class="t" style="left:18px;top:101px;color:#fff;font-weight:bold">Information</div>
<svg class="a" style="left:102px;top:96px" width="82" height="23"><path d="M1 23 V6 L6 1 H81 V23Z" fill="#FE9A48"/><path d="M1.5 23 V6 L6 1.5 H80.5" fill="none" stroke="#fff" stroke-width="1"/><path d="M0.5 23 V5.5 L5.5 0.5 H81.5 V23" fill="none" stroke="#7D8CA4" stroke-width="1"/></svg><div class="t" style="left:108px;top:101px;color:#111;font-weight:normal">Customer</div>
<svg class="a" style="left:184px;top:96px" width="76" height="23"><path d="M1 23 V6 L6 1 H75 V23Z" fill="#FE9A48"/><path d="M1.5 23 V6 L6 1.5 H74.5" fill="none" stroke="#fff" stroke-width="1"/><path d="M0.5 23 V5.5 L5.5 0.5 H75.5 V23" fill="none" stroke="#7D8CA4" stroke-width="1"/></svg><div class="t" style="left:190px;top:101px;color:#111;font-weight:normal">Contacts</div>
<svg class="a" style="left:260px;top:96px" width="57" height="23"><path d="M1 23 V6 L6 1 H56 V23Z" fill="#FE9A48"/><path d="M1.5 23 V6 L6 1.5 H55.5" fill="none" stroke="#fff" stroke-width="1"/><path d="M0.5 23 V5.5 L5.5 0.5 H56.5 V23" fill="none" stroke="#7D8CA4" stroke-width="1"/></svg><div class="t" style="left:266px;top:101px;color:#111;font-weight:normal">Event</div>
<svg class="a" style="left:317px;top:96px" width="60" height="23"><path d="M1 23 V6 L6 1 H59 V23Z" fill="#FE9A48"/><path d="M1.5 23 V6 L6 1.5 H58.5" fill="none" stroke="#fff" stroke-width="1"/><path d="M0.5 23 V5.5 L5.5 0.5 H59.5 V23" fill="none" stroke="#7D8CA4" stroke-width="1"/></svg><div class="t" style="left:323px;top:101px;color:#111;font-weight:normal">Dates</div>
<svg class="a" style="left:377px;top:96px" width="86" height="23"><path d="M1 23 V6 L6 1 H85 V23Z" fill="#FE9A48"/><path d="M1.5 23 V6 L6 1.5 H84.5" fill="none" stroke="#fff" stroke-width="1"/><path d="M0.5 23 V5.5 L5.5 0.5 H85.5 V23" fill="none" stroke="#7D8CA4" stroke-width="1"/></svg><div class="t" style="left:383px;top:101px;color:#111;font-weight:normal">Schedules</div>
<svg class="a" style="left:463px;top:96px" width="76" height="23"><path d="M1 23 V6 L6 1 H75 V23Z" fill="#FE9A48"/><path d="M1.5 23 V6 L6 1.5 H74.5" fill="none" stroke="#fff" stroke-width="1"/><path d="M0.5 23 V5.5 L5.5 0.5 H75.5 V23" fill="none" stroke="#7D8CA4" stroke-width="1"/></svg><div class="t" style="left:469px;top:101px;color:#111;font-weight:normal">Shipping</div>
<svg class="a" style="left:539px;top:96px" width="64" height="23"><path d="M1 23 V6 L6 1 H63 V23Z" fill="#FE9A48"/><path d="M1.5 23 V6 L6 1.5 H62.5" fill="none" stroke="#fff" stroke-width="1"/><path d="M0.5 23 V5.5 L5.5 0.5 H63.5 V23" fill="none" stroke="#7D8CA4" stroke-width="1"/></svg><div class="t" style="left:545px;top:101px;color:#111;font-weight:normal">Return</div>
<svg class="a" style="left:603px;top:96px" width="75" height="23"><path d="M1 23 V6 L6 1 H74 V23Z" fill="#FE9A48"/><path d="M1.5 23 V6 L6 1.5 H73.5" fill="none" stroke="#fff" stroke-width="1"/><path d="M0.5 23 V5.5 L5.5 0.5 H74.5 V23" fill="none" stroke="#7D8CA4" stroke-width="1"/></svg><div class="t" style="left:609px;top:101px;color:#111;font-weight:normal">Payment</div>
<svg class="a" style="left:678px;top:96px" width="66" height="23"><path d="M1 23 V6 L6 1 H65 V23Z" fill="#FE9A48"/><path d="M1.5 23 V6 L6 1.5 H64.5" fill="none" stroke="#fff" stroke-width="1"/><path d="M0.5 23 V5.5 L5.5 0.5 H65.5 V23" fill="none" stroke="#7D8CA4" stroke-width="1"/></svg><div class="t" style="left:684px;top:101px;color:#111;font-weight:normal">Default</div>
<svg class="a" style="left:744px;top:96px" width="53" height="23"><path d="M1 23 V6 L6 1 H52 V23Z" fill="#FE9A48"/><path d="M1.5 23 V6 L6 1.5 H51.5" fill="none" stroke="#fff" stroke-width="1"/><path d="M0.5 23 V5.5 L5.5 0.5 H52.5 V23" fill="none" stroke="#7D8CA4" stroke-width="1"/></svg><div class="t" style="left:750px;top:101px;color:#111;font-weight:normal">Cost</div>
<svg class="a" style="left:797px;top:96px" width="79" height="23"><path d="M1 23 V6 L6 1 H78 V23Z" fill="#FE9A48"/><path d="M1.5 23 V6 L6 1.5 H77.5" fill="none" stroke="#fff" stroke-width="1"/><path d="M0.5 23 V5.5 L5.5 0.5 H78.5 V23" fill="none" stroke="#7D8CA4" stroke-width="1"/></svg><div class="t" style="left:803px;top:101px;color:#111;font-weight:normal">Sub Total</div>
<svg class="a" style="left:876px;top:96px" width="62" height="23"><path d="M1 23 V6 L6 1 H61 V23Z" fill="#FE9A48"/><path d="M1.5 23 V6 L6 1.5 H60.5" fill="none" stroke="#fff" stroke-width="1"/><path d="M0.5 23 V5.5 L5.5 0.5 H61.5 V23" fill="none" stroke="#7D8CA4" stroke-width="1"/></svg><div class="t" style="left:882px;top:101px;color:#111;font-weight:normal">Status</div>
<svg class="a" style="left:938px;top:96px" width="51" height="23"><path d="M1 23 V6 L6 1 H50 V23Z" fill="#FE9A48"/><path d="M1.5 23 V6 L6 1.5 H49.5" fill="none" stroke="#fff" stroke-width="1"/><path d="M0.5 23 V5.5 L5.5 0.5 H50.5 V23" fill="none" stroke="#7D8CA4" stroke-width="1"/></svg><div class="t" style="left:944px;top:101px;color:#111;font-weight:normal">UDF</div>
<div class="a" style="left:10px;top:118px;width:1168px;height:212px;background:#C8DDF2;border:1px solid #6F8CC8;border-right-color:#7A8898;border-bottom-color:#7A8898"></div>
<div class="a" style="left:12px;top:122px;width:1163px;height:204px;background:#fff;border:1px solid #B0B0B0;border-right-color:#B0B0B0"></div>
<div class="a" style="left:1174px;top:122px;width:1px;height:204px;background:#fff"></div>
<div class="a" style="left:101px;top:118px;width:1px;height:1px;background:#6F8CC8"></div>
<div class="a" style="left:14px;top:118px;width:87px;height:1px;background:#C8DDF2"></div>
<div class="a" style="left:11px;top:119px;width:3px;height:1px;background:#fff"></div>
<svg width="0" height="0" style="position:absolute"><defs>
<radialGradient id="lens" cx="0.4" cy="0.35" r="0.6"><stop offset="0" stop-color="#FFFFFF"/><stop offset="0.6" stop-color="#BFE3F8"/><stop offset="1" stop-color="#7FB6DA"/></radialGradient>
<linearGradient id="hdl" x1="0" y1="0" x2="1" y2="1"><stop offset="0" stop-color="#F9C17A"/><stop offset="1" stop-color="#D9782A"/></linearGradient>
<symbol id="mag" viewBox="0 0 16 16"><path d="M9.2 9.6 L14.2 14.4" stroke="#5E5E5E" stroke-width="3.8" stroke-linecap="round"/><path d="M9.4 9.8 L14 14.2" stroke="url(#hdl)" stroke-width="2.2" stroke-linecap="round"/><circle cx="6.3" cy="6.3" r="5" fill="url(#lens)" stroke="#7A8A98" stroke-width="1.3"/></symbol>
</defs></svg>
<div class="t" style="left:17px;top:131px;letter-spacing:0.15px">Number</div>
<div class="t" style="left:17px;top:159px;letter-spacing:0.12px">Description</div>
<div class="t" style="left:17px;top:187px;">Date Created</div>
<div class="t" style="left:17px;top:215px;">Site</div>
<div class="t" style="left:17px;top:243px;">Project Mgr.</div>
<div class="t" style="left:17px;top:271px;letter-spacing:0.25px">Sales Person</div>
<div class="t" style="left:17px;top:299px;letter-spacing:0.2px">Labor Planner</div>
<div class="t" style="left:212px;top:131px;">Version</div>
<div class="t" style="left:212px;top:187px;">Project</div>
<div class="t" style="left:212px;top:215px;">Sub Orders</div>
<div class="fld" style="left:99px;top:128px;width:100px;height:24px;"></div>
<div class="t" style="left:101px;top:134px;">ORD-3630</div>
<div class="fldw" style="left:99px;top:156px;width:255px;height:24px;"></div>
<div class="fld" style="left:99px;top:184px;width:100px;height:24px;"></div>
<div class="t" style="left:101px;top:190px;">08/12/2017</div>
<div class="fld" style="left:99px;top:212px;width:100px;height:24px;"></div>
<div class="t" style="left:101px;top:218px;">Gearhouse</div>
<div class="fld" style="left:264px;top:128px;width:88px;height:24px;"></div>
<div class="t" style="left:266px;top:134px;">1</div>
<svg class="mag" style="left:333px;top:130px" width="16" height="16"><use href="#mag"/></svg>
<div class="fldw" style="left:264px;top:184px;width:88px;height:24px;"></div>
<div class="t" style="left:266px;top:190px;">ORD-3630</div>
<svg class="mag" style="left:333px;top:186px" width="16" height="16"><use href="#mag"/></svg>
<div class="fld" style="left:289px;top:212px;width:66px;height:24px;"></div>
<div class="t" style="left:291px;top:218px;">0</div>
<div class="a" style="left:99px;top:240px;width:255px;height:24px;background:#EEEEEE;border:1px solid #6F86A3;box-shadow:inset 1px 1px 0 #C9DBEF"></div>
<div class="a" style="left:334px;top:240px;width:20px;height:24px;border:1px solid #6F86A3;background:linear-gradient(#F4F8FC,#D6E4F2)"></div>
<svg class="a" style="left:338px;top:250px" width="11" height="6"><path d="M0 0 H11 L5.5 5.5Z" fill="#1A1A1A"/></svg>
<svg class="mag" style="left:318px;top:243px" width="16" height="16"><use href="#mag"/></svg>
<div class="a" style="left:99px;top:268px;width:255px;height:24px;background:#EEEEEE;border:1px solid #6F86A3;box-shadow:inset 1px 1px 0 #C9DBEF"></div>
<div class="a" style="left:334px;top:268px;width:20px;height:24px;border:1px solid #6F86A3;background:linear-gradient(#F4F8FC,#D6E4F2)"></div>
<svg class="a" style="left:338px;top:278px" width="11" height="6"><path d="M0 0 H11 L5.5 5.5Z" fill="#1A1A1A"/></svg>
<svg class="mag" style="left:318px;top:271px" width="16" height="16"><use href="#mag"/></svg>
<div class="t" style="left:102px;top:273px;letter-spacing:-0.2px">Mantra M Mantra</div>
<div class="fldw" style="left:99px;top:296px;width:255px;height:24px;"></div>
<svg class="mag" style="left:335px;top:298px" width="16" height="16"><use href="#mag"/></svg>
<div class="a" style="left:366px;top:131px;width:215px;height:98px;border:1px solid #C6C6C6"></div>
<div class="t" style="left:371px;top:126px;padding:0 2px;background:#fff;font-weight:bold;color:#111">Charge Duration</div>
<div class="t" style="left:369px;top:144px;">Start Date/Time</div>
<div class="t" style="left:369px;top:173px;">End Date/Time</div>
<div class="t" style="left:369px;top:202px;">Duration</div>
<div class="fld" style="left:458px;top:141px;width:120px;height:24px;"></div>
<div class="t" style="left:459px;top:147px;">09/12/2017 06:00 AM</div>
<div class="fld" style="left:458px;top:170px;width:120px;height:24px;"></div>
<div class="t" style="left:459px;top:176px;">10/12/2017 06:00 AM</div>
<div class="fld" style="left:458px;top:199px;width:85px;height:24px;"></div>
<div class="t" style="left:459px;top:205px;">1d</div>
<div class="t" style="left:588px;top:146px;">Conv. Date</div>
<div class="fld" style="left:655px;top:141px;width:89px;height:24px;"></div>
<svg class="a" style="left:589px;top:175px" width="13" height="13"><rect x="1" y="1" width="12" height="12" fill="#fff"/><rect x="2" y="2" width="9" height="9" fill="url(#cbg)"/><path d="M0.5 12 V0.5 H12 M11.5 2 V12 M2 11.5 H12" fill="none" stroke="#74879B" stroke-width="1"/><path d="M3.8 5 V9.6 L9.7 3.2" fill="none" stroke="#141414" stroke-width="1.8"/></svg>
<div class="t" style="left:606px;top:175px;letter-spacing:0.22px">Show Suggestions</div>
<svg class="a" style="left:589px;top:199px" width="13" height="13"><rect x="1" y="1" width="12" height="12" fill="#fff"/><rect x="2" y="2" width="9" height="9" fill="url(#cbg)"/><path d="M0.5 12 V0.5 H12 M11.5 2 V12 M2 11.5 H12" fill="none" stroke="#74879B" stroke-width="1"/></svg>
<div class="t" style="left:606px;top:199px;">Event Pricing</div>
<svg class="a" style="left:754px;top:126px" width="90" height="23"><path d="M1 23 V6 L6 1 H89 V23Z" fill="#C74F2E"/><path d="M1.5 23 V6 L6 1.5 H88.5" fill="none" stroke="#fff" stroke-width="1"/><path d="M0.5 23 V5.5 L5.5 0.5 H89.5 V23" fill="none" stroke="#6F8CC8" stroke-width="1"/></svg><div class="t" style="left:760px;top:131px;color:#fff;font-weight:bold">Comments</div>
<svg class="a" style="left:844px;top:126px" width="120" height="23"><path d="M1 23 V6 L6 1 H119 V23Z" fill="#FE9A48"/><path d="M1.5 23 V6 L6 1.5 H118.5" fill="none" stroke="#fff" stroke-width="1"/><path d="M0.5 23 V5.5 L5.5 0.5 H119.5 V23" fill="none" stroke="#7D8CA4" stroke-width="1"/></svg><div class="t" style="left:850px;top:131px;color:#111;font-weight:normal">LaborComments</div>
<div class="a" style="left:752px;top:148px;width:290px;height:83px;background:#C8DDF2;border:1px solid #6F8CC8;border-right-color:#7A8898;border-bottom-color:#7A8898"></div>
<div class="a" style="left:755px;top:148px;width:88px;height:1px;background:#C8DDF2"></div>
<div class="a" style="left:754px;top:152px;width:285px;height:76px;background:#fff"></div>
<div class="a" style="left:754px;top:152px;width:284px;height:75px;border:1px solid #B0B0B0"></div>
<div class="a" style="left:761px;top:154px;width:269px;height:69px;background:#EEEEEE;border:2px solid #6C7682;border-right-color:#74808C;border-bottom-color:#74808C"></div>
<svg class="mag" style="left:1011px;top:157px" width="16" height="16"><use href="#mag"/></svg>
<div class="t" style="left:362px;top:242px;">Customer</div>
<div class="fld" style="left:421px;top:236px;width:160px;height:24px;"></div>
<div class="t" style="left:422px;top:242px;letter-spacing:0.16px">Cross Country Finance</div>
<svg class="mag" style="left:562px;top:238px" width="16" height="16"><use href="#mag"/></svg>
<div class="t" style="left:362px;top:270px;">Contact</div>
<div class="fld" style="left:421px;top:265px;width:160px;height:24px;"></div>
<div class="t" style="left:422px;top:271px;">Accounts Payable</div>
<svg class="mag" style="left:562px;top:267px" width="16" height="16"><use href="#mag"/></svg>
<div class="t" style="left:362px;top:299px;">Contact Tel #</div>
<div class="fld" style="left:451px;top:294px;width:129px;height:24px;"></div>
<div class="t" style="left:588px;top:242px;">Bill To</div>
<div class="fld" style="left:654px;top:236px;width:160px;height:24px;"></div>
<div class="t" style="left:655px;top:242px;letter-spacing:0.16px">Cross Country Finance</div>
<svg class="mag" style="left:795px;top:238px" width="16" height="16"><use href="#mag"/></svg>
<div class="t" style="left:588px;top:270px;">Bill Contact</div>
<div class="fld" style="left:654px;top:265px;width:160px;height:24px;"></div>
<div class="t" style="left:655px;top:271px;">Accounts Payable</div>
<svg class="mag" style="left:795px;top:267px" width="16" height="16"><use href="#mag"/></svg>
<div class="t" style="left:588px;top:299px;">Language</div>
<div class="fld" style="left:654px;top:294px;width:90px;height:24px;"></div>
<svg class="mag" style="left:725px;top:296px" width="16" height="16"><use href="#mag"/></svg>
<div class="t" style="left:826px;top:247px;letter-spacing:0.12px">Document Folder:</div>
<div class="a" style="left:1014px;top:240px;width:49px;height:23px;border:1px solid #ABABAB;background:#fff"></div>
<div class="a" style="left:1024px;top:242px;width:30px;height:20px;border:1px solid #746A6A;border-radius:1px;background:#fff"></div>
<svg class="a" style="left:1020px;top:242px" width="40" height="20"><text x="5.8" y="13.8" font-family="Liberation Sans" font-weight="bold" font-size="10.5" fill="#000" textLength="26" lengthAdjust="spacingAndGlyphs">Reset</text></svg>
<div class="a" style="left:826px;top:264px;width:216px;height:49px;background:#EEEEEE;border:2px solid #707A86"></div>
<svg class="a" style="left:11px;top:334px" width="67" height="23"><path d="M1 23 V6 L6 1 H66 V23Z" fill="#C74F2E"/><path d="M1.5 23 V6 L6 1.5 H65.5" fill="none" stroke="#fff" stroke-width="1"/><path d="M0.5 23 V5.5 L5.5 0.5 H66.5 V23" fill="none" stroke="#6F8CC8" stroke-width="1"/></svg><div class="t" style="left:15px;top:339px;color:#fff;font-weight:bold">Item(s)</div>
<svg class="a" style="left:78px;top:334px" width="57" height="23"><path d="M1 23 V6 L6 1 H56 V23Z" fill="#FE9A48"/><path d="M1.5 23 V6 L6 1.5 H55.5" fill="none" stroke="#fff" stroke-width="1"/><path d="M0.5 23 V5.5 L5.5 0.5 H56.5 V23" fill="none" stroke="#7D8CA4" stroke-width="1"/></svg><div class="t" style="left:82px;top:339px;color:#111;font-weight:normal">Labor</div>
<div class="a" style="left:8px;top:356px;width:1172px;height:315px;background:#C8DDF2;border:1px solid #6F8CC8;border-right-color:#7A8898;border-bottom-color:#7A8898"></div>
<div class="a" style="left:10px;top:360px;width:1167px;height:308px;background:#fff;border:1px solid #B0B0B0;border-right:2px solid #fff;border-bottom:2px solid #fff"></div>
<div class="a" style="left:1175px;top:360px;width:1px;height:307px;background:#B0B0B0"></div>
<div class="a" style="left:10px;top:666px;width:1166px;height:1px;background:#B0B0B0"></div>
<div class="a" style="left:12px;top:356px;width:65px;height:1px;background:#C8DDF2"></div>
<div class="a" style="left:9px;top:357px;width:3px;height:1px;background:#fff"></div>
<div class="a" style="left:12px;top:362px;width:1162px;height:303px;background:#fff;border:1px solid #6F8090"></div>
<div class="a" style="left:13px;top:363px;width:1160px;height:284px;overflow:hidden">
<div class="a" style="left:0;top:0;width:1162px;height:20px;background:#FF6A35"></div>
<div class="a" style="left:0px;top:0;width:14px;height:19px;background:#C74F2E;border:1px solid #7E351D;box-shadow:inset 1px 1px 0 #FF7443;"></div>
<div class="t" style="left:0px;top:4px;width:14px;text-align:center;color:#FFF1EA">T</div>
<div class="a" style="left:15px;top:0;width:14px;height:19px;background:#C74F2E;border:1px solid #7E351D;box-shadow:inset 1px 1px 0 #FF7443;"></div>
<div class="t" style="left:15px;top:4px;width:14px;text-align:center;color:#FFF1EA">S</div>
<div class="a" style="left:30px;top:0;width:74px;height:19px;background:#C74F2E;border:1px solid #7E351D;box-shadow:inset 1px 1px 0 #FF7443;"></div>
<div class="t" style="left:30px;top:4px;width:74px;text-align:center;color:#FFF1EA">Status</div>
<div class="a" style="left:105px;top:0;width:14px;height:19px;background:#C74F2E;border:1px solid #7E351D;box-shadow:inset 1px 1px 0 #FF7443;"></div>
<div class="t" style="left:105px;top:4px;width:14px;text-align:center;color:#FFF1EA">C</div>
<div class="a" style="left:120px;top:0;width:19px;height:19px;background:#C74F2E;border:1px solid #7E351D;box-shadow:inset 1px 1px 0 #FF7443;"></div>
<div class="t" style="left:120px;top:4px;width:19px;text-align:center;color:#FFF1EA">L</div>
<div class="a" style="left:140px;top:0;width:44px;height:19px;background:#C74F2E;border:1px solid #7E351D;box-shadow:inset 1px 1px 0 #FF7443;"></div>
<div class="t" style="left:140px;top:4px;width:44px;text-align:center;color:#FFF1EA">Action</div>
<div class="a" style="left:185px;top:0;width:133px;height:19px;background:#C74F2E;border:1px solid #7E351D;box-shadow:inset 1px 1px 0 #FF7443;"></div>
<div class="t" style="left:185px;top:4px;width:133px;text-align:center;color:#FFF1EA">Product ID</div>
<div class="a" style="left:319px;top:0;width:259px;height:19px;background:#C74F2E;border:1px solid #7E351D;box-shadow:inset 1px 1px 0 #FF7443;"></div>
<div class="t" style="left:319px;top:4px;width:259px;text-align:center;color:#FFF1EA">Description</div>
<div class="a" style="left:579px;top:0;width:54px;height:19px;background:#C74F2E;border:1px solid #7E351D;box-shadow:inset 1px 1px 0 #FF7443;"></div>
<div class="t" style="left:579px;top:4px;width:54px;text-align:center;color:#FFF1EA">Duration</div>
<div class="a" style="left:634px;top:0;width:29px;height:19px;background:#C74F2E;border:1px solid #7E351D;box-shadow:inset 1px 1px 0 #FF7443;"></div>
<div class="t" style="left:634px;top:4px;width:29px;text-align:center;color:#FFF1EA">DIW</div>
<div class="a" style="left:664px;top:0;width:49px;height:19px;background:#C74F2E;border:1px solid #7E351D;box-shadow:inset 1px 1px 0 #FF7443;"></div>
<div class="t" style="left:664px;top:4px;width:49px;text-align:center;color:#FFF1EA">DIM</div>
<div class="a" style="left:714px;top:0;width:74px;height:19px;background:#C74F2E;border:1px solid #7E351D;box-shadow:inset 1px 1px 0 #FF7443;"></div>
<div class="t" style="left:714px;top:4px;width:74px;text-align:center;color:#FFF1EA">Total Cost</div>
<div class="a" style="left:789px;top:0;width:29px;height:19px;background:#C74F2E;border:1px solid #7E351D;box-shadow:inset 1px 1px 0 #FF7443;"></div>
<div class="t" style="left:789px;top:4px;width:29px;text-align:center;color:#FFF1EA">Qty</div>
<div class="a" style="left:819px;top:0;width:59px;height:19px;background:#C74F2E;border:1px solid #7E351D;box-shadow:inset 1px 1px 0 #FF7443;"></div>
<div class="t" style="left:819px;top:4px;width:59px;text-align:center;color:#FFF1EA">Unit Price</div>
<div class="a" style="left:879px;top:0;width:54px;height:19px;background:#C74F2E;border:1px solid #7E351D;box-shadow:inset 1px 1px 0 #FF7443;"></div>
<div class="t" style="left:879px;top:4px;width:54px;text-align:center;color:#FFF1EA">Discount</div>
<div class="a" style="left:934px;top:0;width:59px;height:19px;background:#C74F2E;border:1px solid #7E351D;box-shadow:inset 1px 1px 0 #FF7443;"></div>
<div class="t" style="left:934px;top:4px;width:59px;text-align:center;color:#FFF1EA">Net Disc</div>
<div class="a" style="left:994px;top:0;width:59px;height:19px;background:#C74F2E;border:1px solid #7E351D;box-shadow:inset 1px 1px 0 #FF7443;"></div>
<div class="t" style="left:994px;top:4px;width:59px;text-align:center;color:#FFF1EA">Net Each</div>
<div class="a" style="left:1054px;top:0;width:74px;height:19px;background:#C74F2E;border:1px solid #7E351D;box-shadow:inset 1px 1px 0 #FF7443;"></div>
<div class="t" style="left:1054px;top:4px;width:74px;text-align:center;color:#FFF1EA">Amount</div>
<div class="a" style="left:1129px;top:0;width:44px;height:19px;background:#C74F2E;border:1px solid #7E351D;box-shadow:inset 1px 1px 0 #FF7443;"></div>
<div class="t" style="left:1129px;top:4px;width:44px;text-align:center;color:#FFF1EA">Unit</div>
<div class="a" style="left:0;top:20px;width:1162px;height:19px;background:#FE9A48;border-bottom:1px solid #C27A45"></div>
<div class="a" style="left:14px;top:20px;width:1px;height:19px;background:#C27A45"></div>
<div class="a" style="left:29px;top:20px;width:1px;height:19px;background:#C27A45"></div>
<div class="t" style="left:31px;top:23px;letter-spacing:0.12px;">Reserved</div>
<div class="a" style="left:104px;top:20px;width:1px;height:19px;background:#C27A45"></div>
<div class="a" style="left:119px;top:20px;width:1px;height:19px;background:#C27A45"></div>
<div class="a" style="left:139px;top:20px;width:1px;height:19px;background:#C27A45"></div>
<div class="t" style="left:141px;top:23px;">Rent</div>
<div class="a" style="left:184px;top:20px;width:1px;height:19px;background:#C27A45"></div>
<div class="t" style="left:186px;top:23px;letter-spacing:-0.2px;">MOTO E3</div>
<div class="a" style="left:318px;top:20px;width:1px;height:19px;background:#C27A45"></div>
<div class="t" style="left:326px;top:23px;letter-spacing:-0.2px;">MOTO E3</div>
<div class="a" style="left:578px;top:20px;width:1px;height:19px;background:#C27A45"></div>
<div class="t" style="left:581px;top:23px;">1d</div>
<div class="a" style="left:633px;top:20px;width:1px;height:19px;background:#C27A45"></div>
<div class="t" style="left:633px;top:23px;width:28px;text-align:right">5.00</div>
<div class="a" style="left:663px;top:20px;width:1px;height:19px;background:#C27A45"></div>
<div class="t" style="left:663px;top:23px;width:48px;text-align:right">10.00</div>
<div class="a" style="left:713px;top:20px;width:1px;height:19px;background:#C27A45"></div>
<div class="t" style="left:713px;top:23px;width:73px;text-align:right">0.00</div>
<div class="a" style="left:788px;top:20px;width:1px;height:19px;background:#C27A45"></div>
<div class="t" style="left:788px;top:23px;width:28px;text-align:right">1</div>
<div class="a" style="left:818px;top:20px;width:1px;height:19px;background:#C27A45"></div>
<div class="t" style="left:818px;top:23px;width:58px;text-align:right">0.00</div>
<div class="a" style="left:878px;top:20px;width:1px;height:19px;background:#C27A45"></div>
<div class="t" style="left:878px;top:23px;width:53px;text-align:right">0.00</div>
<div class="a" style="left:933px;top:20px;width:1px;height:19px;background:#C27A45"></div>
<div class="t" style="left:933px;top:23px;width:58px;text-align:right">0.00</div>
<div class="a" style="left:993px;top:20px;width:1px;height:19px;background:#C27A45"></div>
<div class="t" style="left:993px;top:23px;width:58px;text-align:right">0.00</div>
<div class="a" style="left:1053px;top:20px;width:1px;height:19px;background:#C27A45"></div>
<div class="t" style="left:1053px;top:23px;width:73px;text-align:right">0.00</div>
<div class="a" style="left:1128px;top:20px;width:1px;height:19px;background:#C27A45"></div>
<div class="t" style="left:1130px;top:23px;">Day</div>
<svg class="a" style="left:1px;top:23px" width="13" height="13"><rect x="1" y="1" width="12" height="12" fill="#fff"/><rect x="2" y="2" width="9" height="9" fill="url(#cbg)"/><path d="M0.5 12 V0.5 H12 M11.5 2 V12 M2 11.5 H12" fill="none" stroke="#74879B" stroke-width="1"/><path d="M3.8 5 V9.6 L9.7 3.2" fill="none" stroke="#141414" stroke-width="1.8"/></svg>
<svg class="a" style="left:16px;top:23px" width="13" height="13"><rect x="1" y="1" width="12" height="12" fill="#fff"/><rect x="2" y="2" width="9" height="9" fill="url(#cbg)"/><path d="M0.5 12 V0.5 H12 M11.5 2 V12 M2 11.5 H12" fill="none" stroke="#74879B" stroke-width="1"/></svg>
<svg class="a" style="left:106px;top:23px" width="13" height="13"><rect x="1" y="1" width="12" height="12" fill="#fff"/><rect x="2" y="2" width="9" height="9" fill="url(#cbg)"/><path d="M0.5 12 V0.5 H12 M11.5 2 V12 M2 11.5 H12" fill="none" stroke="#74879B" stroke-width="1"/></svg>
<svg class="a" style="left:123px;top:23px" width="13" height="13"><rect x="1" y="1" width="12" height="12" fill="#fff"/><rect x="2" y="2" width="9" height="9" fill="url(#cbg)"/><path d="M0.5 12 V0.5 H12 M11.5 2 V12 M2 11.5 H12" fill="none" stroke="#74879B" stroke-width="1"/></svg>
<div class="a" style="left:0;top:39px;width:1162px;height:19px;background:#fff;border-bottom:1px solid #C27A45"></div>
<div class="a" style="left:14px;top:39px;width:1px;height:19px;background:#C27A45"></div>
<div class="a" style="left:29px;top:39px;width:1px;height:19px;background:#C27A45"></div>
<div class="t" style="left:31px;top:42px;letter-spacing:0.12px;">Reserved</div>
<div class="a" style="left:104px;top:39px;width:1px;height:19px;background:#C27A45"></div>
<div class="a" style="left:119px;top:39px;width:1px;height:19px;background:#C27A45"></div>
<div class="a" style="left:139px;top:39px;width:1px;height:19px;background:#C27A45"></div>
<div class="t" style="left:141px;top:42px;">Rent</div>
<div class="a" style="left:184px;top:39px;width:1px;height:19px;background:#C27A45"></div>
<div class="t" style="left:186px;top:42px;letter-spacing:-0.2px;">MOTO G</div>
<div class="a" style="left:318px;top:39px;width:1px;height:19px;background:#C27A45"></div>
<div class="t" style="left:326px;top:42px;letter-spacing:-0.2px;">MOTO G</div>
<div class="a" style="left:578px;top:39px;width:1px;height:19px;background:#C27A45"></div>
<div class="t" style="left:581px;top:42px;">1d</div>
<div class="a" style="left:633px;top:39px;width:1px;height:19px;background:#C27A45"></div>
<div class="t" style="left:633px;top:42px;width:28px;text-align:right">5.00</div>
<div class="a" style="left:663px;top:39px;width:1px;height:19px;background:#C27A45"></div>
<div class="t" style="left:663px;top:42px;width:48px;text-align:right">10.00</div>
<div class="a" style="left:713px;top:39px;width:1px;height:19px;background:#C27A45"></div>
<div class="t" style="left:713px;top:42px;width:73px;text-align:right">0.00</div>
<div class="a" style="left:788px;top:39px;width:1px;height:19px;background:#C27A45"></div>
<div class="t" style="left:788px;top:42px;width:28px;text-align:right">1</div>
<div class="a" style="left:818px;top:39px;width:1px;height:19px;background:#C27A45"></div>
<div class="t" style="left:818px;top:42px;width:58px;text-align:right">0.00</div>
<div class="a" style="left:878px;top:39px;width:1px;height:19px;background:#C27A45"></div>
<div class="t" style="left:878px;top:42px;width:53px;text-align:right">0.00</div>
<div class="a" style="left:933px;top:39px;width:1px;height:19px;background:#C27A45"></div>
<div class="t" style="left:933px;top:42px;width:58px;text-align:right">0.00</div>
<div class="a" style="left:993px;top:39px;width:1px;height:19px;background:#C27A45"></div>
<div class="t" style="left:993px;top:42px;width:58px;text-align:right">0.00</div>
<div class="a" style="left:1053px;top:39px;width:1px;height:19px;background:#C27A45"></div>
<div class="t" style="left:1053px;top:42px;width:73px;text-align:right">0.00</div>
<div class="a" style="left:1128px;top:39px;width:1px;height:19px;background:#C27A45"></div>
<div class="t" style="left:1130px;top:42px;">Day</div>
<svg class="a" style="left:1px;top:42px" width="13" height="13"><rect x="1" y="1" width="12" height="12" fill="#fff"/><rect x="2" y="2" width="9" height="9" fill="url(#cbg)"/><path d="M0.5 12 V0.5 H12 M11.5 2 V12 M2 11.5 H12" fill="none" stroke="#74879B" stroke-width="1"/><path d="M3.8 5 V9.6 L9.7 3.2" fill="none" stroke="#141414" stroke-width="1.8"/></svg>
<svg class="a" style="left:16px;top:42px" width="13" height="13"><rect x="1" y="1" width="12" height="12" fill="#fff"/><rect x="2" y="2" width="9" height="9" fill="url(#cbg)"/><path d="M0.5 12 V0.5 H12 M11.5 2 V12 M2 11.5 H12" fill="none" stroke="#74879B" stroke-width="1"/></svg>
<svg class="a" style="left:106px;top:42px" width="13" height="13"><rect x="1" y="1" width="12" height="12" fill="#fff"/><rect x="2" y="2" width="9" height="9" fill="url(#cbg)"/><path d="M0.5 12 V0.5 H12 M11.5 2 V12 M2 11.5 H12" fill="none" stroke="#74879B" stroke-width="1"/></svg>
<svg class="a" style="left:123px;top:42px" width="13" height="13"><rect x="1" y="1" width="12" height="12" fill="#fff"/><rect x="2" y="2" width="9" height="9" fill="url(#cbg)"/><path d="M0.5 12 V0.5 H12 M11.5 2 V12 M2 11.5 H12" fill="none" stroke="#74879B" stroke-width="1"/></svg>
<div class="a" style="left:0;top:58px;width:1162px;height:19px;background:#fff;border-bottom:1px solid #C27A45"></div>
<div class="a" style="left:14px;top:58px;width:1px;height:19px;background:#C27A45"></div>
<div class="a" style="left:29px;top:58px;width:1px;height:19px;background:#C27A45"></div>
<div class="t" style="left:31px;top:61px;letter-spacing:0.12px;">Reserved</div>
<div class="a" style="left:104px;top:58px;width:1px;height:19px;background:#C27A45"></div>
<div class="a" style="left:119px;top:58px;width:1px;height:19px;background:#C27A45"></div>
<div class="a" style="left:139px;top:58px;width:1px;height:19px;background:#C27A45"></div>
<div class="t" style="left:141px;top:61px;">Rent</div>
<div class="a" style="left:184px;top:58px;width:1px;height:19px;background:#C27A45"></div>
<div class="t" style="left:186px;top:61px;letter-spacing:-0.2px;">MOTO G5 COVER</div>
<div class="a" style="left:318px;top:58px;width:1px;height:19px;background:#C27A45"></div>
<div class="t" style="left:326px;top:61px;letter-spacing:-0.2px;">MOTO G5 COVER</div>
<div class="a" style="left:578px;top:58px;width:1px;height:19px;background:#C27A45"></div>
<div class="t" style="left:581px;top:61px;">1d</div>
<div class="a" style="left:633px;top:58px;width:1px;height:19px;background:#C27A45"></div>
<div class="t" style="left:633px;top:61px;width:28px;text-align:right">5.00</div>
<div class="a" style="left:663px;top:58px;width:1px;height:19px;background:#C27A45"></div>
<div class="t" style="left:663px;top:61px;width:48px;text-align:right">10.00</div>
<div class="a" style="left:713px;top:58px;width:1px;height:19px;background:#C27A45"></div>
<div class="t" style="left:713px;top:61px;width:73px;text-align:right">0.00</div>
<div class="a" style="left:788px;top:58px;width:1px;height:19px;background:#C27A45"></div>
<div class="t" style="left:788px;top:61px;width:28px;text-align:right">1</div>
<div class="a" style="left:818px;top:58px;width:1px;height:19px;background:#C27A45"></div>
<div class="t" style="left:818px;top:61px;width:58px;text-align:right">0.00</div>
<div class="a" style="left:878px;top:58px;width:1px;height:19px;background:#C27A45"></div>
<div class="t" style="left:878px;top:61px;width:53px;text-align:right">0.00</div>
<div class="a" style="left:933px;top:58px;width:1px;height:19px;background:#C27A45"></div>
<div class="t" style="left:933px;top:61px;width:58px;text-align:right">0.00</div>
<div class="a" style="left:993px;top:58px;width:1px;height:19px;background:#C27A45"></div>
<div class="t" style="left:993px;top:61px;width:58px;text-align:right">0.00</div>
<div class="a" style="left:1053px;top:58px;width:1px;height:19px;background:#C27A45"></div>
<div class="t" style="left:1053px;top:61px;width:73px;text-align:right">0.00</div>
<div class="a" style="left:1128px;top:58px;width:1px;height:19px;background:#C27A45"></div>
<div class="t" style="left:1130px;top:61px;">Day</div>
<svg class="a" style="left:1px;top:61px" width="13" height="13"><rect x="1" y="1" width="12" height="12" fill="#fff"/><rect x="2" y="2" width="9" height="9" fill="url(#cbg)"/><path d="M0.5 12 V0.5 H12 M11.5 2 V12 M2 11.5 H12" fill="none" stroke="#74879B" stroke-width="1"/><path d="M3.8 5 V9.6 L9.7 3.2" fill="none" stroke="#141414" stroke-width="1.8"/></svg>
<svg class="a" style="left:16px;top:61px" width="13" height="13"><rect x="1" y="1" width="12" height="12" fill="#fff"/><rect x="2" y="2" width="9" height="9" fill="url(#cbg)"/><path d="M0.5 12 V0.5 H12 M11.5 2 V12 M2 11.5 H12" fill="none" stroke="#74879B" stroke-width="1"/></svg>
<svg class="a" style="left:106px;top:61px" width="13" height="13"><rect x="1" y="1" width="12" height="12" fill="#fff"/><rect x="2" y="2" width="9" height="9" fill="url(#cbg)"/><path d="M0.5 12 V0.5 H12 M11.5 2 V12 M2 11.5 H12" fill="none" stroke="#74879B" stroke-width="1"/></svg>
<svg class="a" style="left:123px;top:61px" width="13" height="13"><rect x="1" y="1" width="12" height="12" fill="#fff"/><rect x="2" y="2" width="9" height="9" fill="url(#cbg)"/><path d="M0.5 12 V0.5 H12 M11.5 2 V12 M2 11.5 H12" fill="none" stroke="#74879B" stroke-width="1"/></svg>
<div class="a" style="left:0;top:77px;width:1162px;height:19px;background:#fff;border-bottom:1px solid #C27A45"></div>
<div class="a" style="left:14px;top:77px;width:1px;height:19px;background:#C27A45"></div>
<div class="a" style="left:29px;top:77px;width:1px;height:19px;background:#C27A45"></div>
<div class="t" style="left:31px;top:80px;letter-spacing:0.12px;">Reserved</div>
<div class="a" style="left:104px;top:77px;width:1px;height:19px;background:#C27A45"></div>
<div class="a" style="left:119px;top:77px;width:1px;height:19px;background:#C27A45"></div>
<div class="a" style="left:139px;top:77px;width:1px;height:19px;background:#C27A45"></div>
<div class="t" style="left:141px;top:80px;">Rent</div>
<div class="a" style="left:184px;top:77px;width:1px;height:19px;background:#C27A45"></div>
<div class="t" style="left:186px;top:80px;letter-spacing:-0.2px;">MOTO G5 PLUS</div>
<div class="a" style="left:318px;top:77px;width:1px;height:19px;background:#C27A45"></div>
<div class="t" style="left:326px;top:80px;letter-spacing:-0.2px;">MOTO G5 PLUS</div>
<div class="a" style="left:578px;top:77px;width:1px;height:19px;background:#C27A45"></div>
<div class="t" style="left:581px;top:80px;">1d</div>
<div class="a" style="left:633px;top:77px;width:1px;height:19px;background:#C27A45"></div>
<div class="t" style="left:633px;top:80px;width:28px;text-align:right">5.00</div>
<div class="a" style="left:663px;top:77px;width:1px;height:19px;background:#C27A45"></div>
<div class="t" style="left:663px;top:80px;width:48px;text-align:right">10.00</div>
<div class="a" style="left:713px;top:77px;width:1px;height:19px;background:#C27A45"></div>
<div class="t" style="left:713px;top:80px;width:73px;text-align:right">0.00</div>
<div class="a" style="left:788px;top:77px;width:1px;height:19px;background:#C27A45"></div>
<div class="t" style="left:788px;top:80px;width:28px;text-align:right">1</div>
<div class="a" style="left:818px;top:77px;width:1px;height:19px;background:#C27A45"></div>
<div class="t" style="left:818px;top:80px;width:58px;text-align:right">0.00</div>
<div class="a" style="left:878px;top:77px;width:1px;height:19px;background:#C27A45"></div>
<div class="t" style="left:878px;top:80px;width:53px;text-align:right">0.00</div>
<div class="a" style="left:933px;top:77px;width:1px;height:19px;background:#C27A45"></div>
<div class="t" style="left:933px;top:80px;width:58px;text-align:right">0.00</div>
<div class="a" style="left:993px;top:77px;width:1px;height:19px;background:#C27A45"></div>
<div class="t" style="left:993px;top:80px;width:58px;text-align:right">0.00</div>
<div class="a" style="left:1053px;top:77px;width:1px;height:19px;background:#C27A45"></div>
<div class="t" style="left:1053px;top:80px;width:73px;text-align:right">0.00</div>
<div class="a" style="left:1128px;top:77px;width:1px;height:19px;background:#C27A45"></div>
<div class="t" style="left:1130px;top:80px;">Day</div>
<svg class="a" style="left:1px;top:80px" width="13" height="13"><rect x="1" y="1" width="12" height="12" fill="#fff"/><rect x="2" y="2" width="9" height="9" fill="url(#cbg)"/><path d="M0.5 12 V0.5 H12 M11.5 2 V12 M2 11.5 H12" fill="none" stroke="#74879B" stroke-width="1"/><path d="M3.8 5 V9.6 L9.7 3.2" fill="none" stroke="#141414" stroke-width="1.8"/></svg>
<svg class="a" style="left:16px;top:80px" width="13" height="13"><rect x="1" y="1" width="12" height="12" fill="#fff"/><rect x="2" y="2" width="9" height="9" fill="url(#cbg)"/><path d="M0.5 12 V0.5 H12 M11.5 2 V12 M2 11.5 H12" fill="none" stroke="#74879B" stroke-width="1"/></svg>
<svg class="a" style="left:106px;top:80px" width="13" height="13"><rect x="1" y="1" width="12" height="12" fill="#fff"/><rect x="2" y="2" width="9" height="9" fill="url(#cbg)"/><path d="M0.5 12 V0.5 H12 M11.5 2 V12 M2 11.5 H12" fill="none" stroke="#74879B" stroke-width="1"/></svg>
<svg class="a" style="left:123px;top:80px" width="13" height="13"><rect x="1" y="1" width="12" height="12" fill="#fff"/><rect x="2" y="2" width="9" height="9" fill="url(#cbg)"/><path d="M0.5 12 V0.5 H12 M11.5 2 V12 M2 11.5 H12" fill="none" stroke="#74879B" stroke-width="1"/></svg>
<div class="a" style="left:0;top:96px;width:1162px;height:19px;background:#fff;border-bottom:1px solid #C27A45"></div>
<div class="a" style="left:14px;top:96px;width:1px;height:19px;background:#C27A45"></div>
<div class="a" style="left:29px;top:96px;width:1px;height:19px;background:#C27A45"></div>
<div class="t" style="left:31px;top:99px;letter-spacing:0.12px;">Reserved</div>
<div class="a" style="left:104px;top:96px;width:1px;height:19px;background:#C27A45"></div>
<div class="a" style="left:119px;top:96px;width:1px;height:19px;background:#C27A45"></div>
<div class="a" style="left:139px;top:96px;width:1px;height:19px;background:#C27A45"></div>
<div class="t" style="left:141px;top:99px;">Rent</div>
<div class="a" style="left:184px;top:96px;width:1px;height:19px;background:#C27A45"></div>
<div class="t" style="left:186px;top:99px;letter-spacing:-0.2px;">MOTO HEADPHONES</div>
<div class="a" style="left:318px;top:96px;width:1px;height:19px;background:#C27A45"></div>
<div class="t" style="left:326px;top:99px;letter-spacing:-0.2px;">MOTO HEADPHONES</div>
<div class="a" style="left:578px;top:96px;width:1px;height:19px;background:#C27A45"></div>
<div class="t" style="left:581px;top:99px;">1d</div>
<div class="a" style="left:633px;top:96px;width:1px;height:19px;background:#C27A45"></div>
<div class="t" style="left:633px;top:99px;width:28px;text-align:right">5.00</div>
<div class="a" style="left:663px;top:96px;width:1px;height:19px;background:#C27A45"></div>
<div class="t" style="left:663px;top:99px;width:48px;text-align:right">10.00</div>
<div class="a" style="left:713px;top:96px;width:1px;height:19px;background:#C27A45"></div>
<div class="t" style="left:713px;top:99px;width:73px;text-align:right">0.00</div>
<div class="a" style="left:788px;top:96px;width:1px;height:19px;background:#C27A45"></div>
<div class="t" style="left:788px;top:99px;width:28px;text-align:right">1</div>
<div class="a" style="left:818px;top:96px;width:1px;height:19px;background:#C27A45"></div>
<div class="t" style="left:818px;top:99px;width:58px;text-align:right">0.00</div>
<div class="a" style="left:878px;top:96px;width:1px;height:19px;background:#C27A45"></div>
<div class="t" style="left:878px;top:99px;width:53px;text-align:right">0.00</div>
<div class="a" style="left:933px;top:96px;width:1px;height:19px;background:#C27A45"></div>
<div class="t" style="left:933px;top:99px;width:58px;text-align:right">0.00</div>
<div class="a" style="left:993px;top:96px;width:1px;height:19px;background:#C27A45"></div>
<div class="t" style="left:993px;top:99px;width:58px;text-align:right">0.00</div>
<div class="a" style="left:1053px;top:96px;width:1px;height:19px;background:#C27A45"></div>
<div class="t" style="left:1053px;top:99px;width:73px;text-align:right">0.00</div>
<div class="a" style="left:1128px;top:96px;width:1px;height:19px;background:#C27A45"></div>
<div class="t" style="left:1130px;top:99px;">Day</div>
<svg class="a" style="left:1px;top:99px" width="13" height="13"><rect x="1" y="1" width="12" height="12" fill="#fff"/><rect x="2" y="2" width="9" height="9" fill="url(#cbg)"/><path d="M0.5 12 V0.5 H12 M11.5 2 V12 M2 11.5 H12" fill="none" stroke="#74879B" stroke-width="1"/><path d="M3.8 5 V9.6 L9.7 3.2" fill="none" stroke="#141414" stroke-width="1.8"/></svg>
<svg class="a" style="left:16px;top:99px" width="13" height="13"><rect x="1" y="1" width="12" height="12" fill="#fff"/><rect x="2" y="2" width="9" height="9" fill="url(#cbg)"/><path d="M0.5 12 V0.5 H12 M11.5 2 V12 M2 11.5 H12" fill="none" stroke="#74879B" stroke-width="1"/></svg>
<svg class="a" style="left:106px;top:99px" width="13" height="13"><rect x="1" y="1" width="12" height="12" fill="#fff"/><rect x="2" y="2" width="9" height="9" fill="url(#cbg)"/><path d="M0.5 12 V0.5 H12 M11.5 2 V12 M2 11.5 H12" fill="none" stroke="#74879B" stroke-width="1"/></svg>
<svg class="a" style="left:123px;top:99px" width="13" height="13"><rect x="1" y="1" width="12" height="12" fill="#fff"/><rect x="2" y="2" width="9" height="9" fill="url(#cbg)"/><path d="M0.5 12 V0.5 H12 M11.5 2 V12 M2 11.5 H12" fill="none" stroke="#74879B" stroke-width="1"/></svg>
<div class="a" style="left:0;top:115px;width:1162px;height:19px;background:#fff;border-bottom:1px solid #C27A45"></div>
<div class="a" style="left:14px;top:115px;width:1px;height:19px;background:#C27A45"></div>
<div class="a" style="left:29px;top:115px;width:1px;height:19px;background:#C27A45"></div>
<div class="t" style="left:31px;top:118px;letter-spacing:0.12px;">Reserved</div>
<div class="a" style="left:104px;top:115px;width:1px;height:19px;background:#C27A45"></div>
<div class="a" style="left:119px;top:115px;width:1px;height:19px;background:#C27A45"></div>
<div class="a" style="left:139px;top:115px;width:1px;height:19px;background:#C27A45"></div>
<div class="t" style="left:141px;top:118px;">Rent</div>
<div class="a" style="left:184px;top:115px;width:1px;height:19px;background:#C27A45"></div>
<div class="t" style="left:186px;top:118px;letter-spacing:-0.2px;">MOTO2</div>
<div class="a" style="left:318px;top:115px;width:1px;height:19px;background:#C27A45"></div>
<div class="t" style="left:326px;top:118px;letter-spacing:-0.2px;">MOTO2</div>
<div class="a" style="left:578px;top:115px;width:1px;height:19px;background:#C27A45"></div>
<div class="t" style="left:581px;top:118px;">1d</div>
<div class="a" style="left:633px;top:115px;width:1px;height:19px;background:#C27A45"></div>
<div class="t" style="left:633px;top:118px;width:28px;text-align:right">5.00</div>
<div class="a" style="left:663px;top:115px;width:1px;height:19px;background:#C27A45"></div>
<div class="t" style="left:663px;top:118px;width:48px;text-align:right">10.00</div>
<div class="a" style="left:713px;top:115px;width:1px;height:19px;background:#C27A45"></div>
<div class="t" style="left:713px;top:118px;width:73px;text-align:right">0.00</div>
<div class="a" style="left:788px;top:115px;width:1px;height:19px;background:#C27A45"></div>
<div class="t" style="left:788px;top:118px;width:28px;text-align:right">1</div>
<div class="a" style="left:818px;top:115px;width:1px;height:19px;background:#C27A45"></div>
<div class="t" style="left:818px;top:118px;width:58px;text-align:right">0.00</div>
<div class="a" style="left:878px;top:115px;width:1px;height:19px;background:#C27A45"></div>
<div class="t" style="left:878px;top:118px;width:53px;text-align:right">0.00</div>
<div class="a" style="left:933px;top:115px;width:1px;height:19px;background:#C27A45"></div>
<div class="t" style="left:933px;top:118px;width:58px;text-align:right">0.00</div>
<div class="a" style="left:993px;top:115px;width:1px;height:19px;background:#C27A45"></div>
<div class="t" style="left:993px;top:118px;width:58px;text-align:right">0.00</div>
<div class="a" style="left:1053px;top:115px;width:1px;height:19px;background:#C27A45"></div>
<div class="t" style="left:1053px;top:118px;width:73px;text-align:right">0.00</div>
<div class="a" style="left:1128px;top:115px;width:1px;height:19px;background:#C27A45"></div>
<div class="t" style="left:1130px;top:118px;">Day</div>
<svg class="a" style="left:1px;top:118px" width="13" height="13"><rect x="1" y="1" width="12" height="12" fill="#fff"/><rect x="2" y="2" width="9" height="9" fill="url(#cbg)"/><path d="M0.5 12 V0.5 H12 M11.5 2 V12 M2 11.5 H12" fill="none" stroke="#74879B" stroke-width="1"/><path d="M3.8 5 V9.6 L9.7 3.2" fill="none" stroke="#141414" stroke-width="1.8"/></svg>
<svg class="a" style="left:16px;top:118px" width="13" height="13"><rect x="1" y="1" width="12" height="12" fill="#fff"/><rect x="2" y="2" width="9" height="9" fill="url(#cbg)"/><path d="M0.5 12 V0.5 H12 M11.5 2 V12 M2 11.5 H12" fill="none" stroke="#74879B" stroke-width="1"/></svg>
<svg class="a" style="left:106px;top:118px" width="13" height="13"><rect x="1" y="1" width="12" height="12" fill="#fff"/><rect x="2" y="2" width="9" height="9" fill="url(#cbg)"/><path d="M0.5 12 V0.5 H12 M11.5 2 V12 M2 11.5 H12" fill="none" stroke="#74879B" stroke-width="1"/></svg>
<svg class="a" style="left:123px;top:118px" width="13" height="13"><rect x="1" y="1" width="12" height="12" fill="#fff"/><rect x="2" y="2" width="9" height="9" fill="url(#cbg)"/><path d="M0.5 12 V0.5 H12 M11.5 2 V12 M2 11.5 H12" fill="none" stroke="#74879B" stroke-width="1"/></svg>
<div class="a" style="left:0;top:134px;width:1162px;height:19px;background:#fff;border-bottom:1px solid #C27A45"></div>
<div class="a" style="left:14px;top:134px;width:1px;height:19px;background:#C27A45"></div>
<div class="a" style="left:29px;top:134px;width:1px;height:19px;background:#C27A45"></div>
<div class="t" style="left:31px;top:137px;letter-spacing:0.12px;">Reserved</div>
<div class="a" style="left:104px;top:134px;width:1px;height:19px;background:#C27A45"></div>
<div class="a" style="left:119px;top:134px;width:1px;height:19px;background:#C27A45"></div>
<div class="a" style="left:139px;top:134px;width:1px;height:19px;background:#C27A45"></div>
<div class="t" style="left:141px;top:137px;">Rent</div>
<div class="a" style="left:184px;top:134px;width:1px;height:19px;background:#C27A45"></div>
<div class="t" style="left:186px;top:137px;letter-spacing:-0.2px;">MOTO4</div>
<div class="a" style="left:318px;top:134px;width:1px;height:19px;background:#C27A45"></div>
<div class="t" style="left:326px;top:137px;letter-spacing:-0.2px;">MOTO4</div>
<div class="a" style="left:578px;top:134px;width:1px;height:19px;background:#C27A45"></div>
<div class="t" style="left:581px;top:137px;">1d</div>
<div class="a" style="left:633px;top:134px;width:1px;height:19px;background:#C27A45"></div>
<div class="t" style="left:633px;top:137px;width:28px;text-align:right">5.00</div>
<div class="a" style="left:663px;top:134px;width:1px;height:19px;background:#C27A45"></div>
<div class="t" style="left:663px;top:137px;width:48px;text-align:right">10.00</div>
<div class="a" style="left:713px;top:134px;width:1px;height:19px;background:#C27A45"></div>
<div class="t" style="left:713px;top:137px;width:73px;text-align:right">0.00</div>
<div class="a" style="left:788px;top:134px;width:1px;height:19px;background:#C27A45"></div>
<div class="t" style="left:788px;top:137px;width:28px;text-align:right">1</div>
<div class="a" style="left:818px;top:134px;width:1px;height:19px;background:#C27A45"></div>
<div class="t" style="left:818px;top:137px;width:58px;text-align:right">0.00</div>
<div class="a" style="left:878px;top:134px;width:1px;height:19px;background:#C27A45"></div>
<div class="t" style="left:878px;top:137px;width:53px;text-align:right">0.00</div>
<div class="a" style="left:933px;top:134px;width:1px;height:19px;background:#C27A45"></div>
<div class="t" style="left:933px;top:137px;width:58px;text-align:right">0.00</div>
<div class="a" style="left:993px;top:134px;width:1px;height:19px;background:#C27A45"></div>
<div class="t" style="left:993px;top:137px;width:58px;text-align:right">0.00</div>
<div class="a" style="left:1053px;top:134px;width:1px;height:19px;background:#C27A45"></div>
<div class="t" style="left:1053px;top:137px;width:73px;text-align:right">0.00</div>
<div class="a" style="left:1128px;top:134px;width:1px;height:19px;background:#C27A45"></div>
<div class="t" style="left:1130px;top:137px;">Day</div>
<svg class="a" style="left:1px;top:137px" width="13" height="13"><rect x="1" y="1" width="12" height="12" fill="#fff"/><rect x="2" y="2" width="9" height="9" fill="url(#cbg)"/><path d="M0.5 12 V0.5 H12 M11.5 2 V12 M2 11.5 H12" fill="none" stroke="#74879B" stroke-width="1"/><path d="M3.8 5 V9.6 L9.7 3.2" fill="none" stroke="#141414" stroke-width="1.8"/></svg>
<svg class="a" style="left:16px;top:137px" width="13" height="13"><rect x="1" y="1" width="12" height="12" fill="#fff"/><rect x="2" y="2" width="9" height="9" fill="url(#cbg)"/><path d="M0.5 12 V0.5 H12 M11.5 2 V12 M2 11.5 H12" fill="none" stroke="#74879B" stroke-width="1"/></svg>
<svg class="a" style="left:106px;top:137px" width="13" height="13"><rect x="1" y="1" width="12" height="12" fill="#fff"/><rect x="2" y="2" width="9" height="9" fill="url(#cbg)"/><path d="M0.5 12 V0.5 H12 M11.5 2 V12 M2 11.5 H12" fill="none" stroke="#74879B" stroke-width="1"/></svg>
<svg class="a" style="left:123px;top:137px" width="13" height="13"><rect x="1" y="1" width="12" height="12" fill="#fff"/><rect x="2" y="2" width="9" height="9" fill="url(#cbg)"/><path d="M0.5 12 V0.5 H12 M11.5 2 V12 M2 11.5 H12" fill="none" stroke="#74879B" stroke-width="1"/></svg>
<div class="a" style="left:0;top:153px;width:1162px;height:19px;background:#fff;border-bottom:1px solid #C27A45"></div>
<div class="a" style="left:14px;top:153px;width:1px;height:19px;background:#C27A45"></div>
<div class="a" style="left:29px;top:153px;width:1px;height:19px;background:#C27A45"></div>
<div class="t" style="left:31px;top:156px;letter-spacing:0.12px;">Reserved</div>
<div class="a" style="left:104px;top:153px;width:1px;height:19px;background:#C27A45"></div>
<div class="a" style="left:119px;top:153px;width:1px;height:19px;background:#C27A45"></div>
<div class="a" style="left:139px;top:153px;width:1px;height:19px;background:#C27A45"></div>
<div class="t" style="left:141px;top:156px;">Rent</div>
<div class="a" style="left:184px;top:153px;width:1px;height:19px;background:#C27A45"></div>
<div class="t" style="left:186px;top:156px;letter-spacing:-0.2px;">MOTOM2</div>
<div class="a" style="left:318px;top:153px;width:1px;height:19px;background:#C27A45"></div>
<div class="t" style="left:326px;top:156px;letter-spacing:-0.2px;">MOTOM2</div>
<div class="a" style="left:578px;top:153px;width:1px;height:19px;background:#C27A45"></div>
<div class="t" style="left:581px;top:156px;">1d</div>
<div class="a" style="left:633px;top:153px;width:1px;height:19px;background:#C27A45"></div>
<div class="t" style="left:633px;top:156px;width:28px;text-align:right">5.00</div>
<div class="a" style="left:663px;top:153px;width:1px;height:19px;background:#C27A45"></div>
<div class="t" style="left:663px;top:156px;width:48px;text-align:right">10.00</div>
<div class="a" style="left:713px;top:153px;width:1px;height:19px;background:#C27A45"></div>
<div class="t" style="left:713px;top:156px;width:73px;text-align:right">0.00</div>
<div class="a" style="left:788px;top:153px;width:1px;height:19px;background:#C27A45"></div>
<div class="t" style="left:788px;top:156px;width:28px;text-align:right">1</div>
<div class="a" style="left:818px;top:153px;width:1px;height:19px;background:#C27A45"></div>
<div class="t" style="left:818px;top:156px;width:58px;text-align:right">0.00</div>
<div class="a" style="left:878px;top:153px;width:1px;height:19px;background:#C27A45"></div>
<div class="t" style="left:878px;top:156px;width:53px;text-align:right">0.00</div>
<div class="a" style="left:933px;top:153px;width:1px;height:19px;background:#C27A45"></div>
<div class="t" style="left:933px;top:156px;width:58px;text-align:right">0.00</div>
<div class="a" style="left:993px;top:153px;width:1px;height:19px;background:#C27A45"></div>
<div class="t" style="left:993px;top:156px;width:58px;text-align:right">0.00</div>
<div class="a" style="left:1053px;top:153px;width:1px;height:19px;background:#C27A45"></div>
<div class="t" style="left:1053px;top:156px;width:73px;text-align:right">0.00</div>
<div class="a" style="left:1128px;top:153px;width:1px;height:19px;background:#C27A45"></div>
<div class="t" style="left:1130px;top:156px;">Day</div>
<svg class="a" style="left:1px;top:156px" width="13" height="13"><rect x="1" y="1" width="12" height="12" fill="#fff"/><rect x="2" y="2" width="9" height="9" fill="url(#cbg)"/><path d="M0.5 12 V0.5 H12 M11.5 2 V12 M2 11.5 H12" fill="none" stroke="#74879B" stroke-width="1"/><path d="M3.8 5 V9.6 L9.7 3.2" fill="none" stroke="#141414" stroke-width="1.8"/></svg>
<svg class="a" style="left:16px;top:156px" width="13" height="13"><rect x="1" y="1" width="12" height="12" fill="#fff"/><rect x="2" y="2" width="9" height="9" fill="url(#cbg)"/><path d="M0.5 12 V0.5 H12 M11.5 2 V12 M2 11.5 H12" fill="none" stroke="#74879B" stroke-width="1"/></svg>
<svg class="a" style="left:106px;top:156px" width="13" height="13"><rect x="1" y="1" width="12" height="12" fill="#fff"/><rect x="2" y="2" width="9" height="9" fill="url(#cbg)"/><path d="M0.5 12 V0.5 H12 M11.5 2 V12 M2 11.5 H12" fill="none" stroke="#74879B" stroke-width="1"/></svg>
<svg class="a" style="left:123px;top:156px" width="13" height="13"><rect x="1" y="1" width="12" height="12" fill="#fff"/><rect x="2" y="2" width="9" height="9" fill="url(#cbg)"/><path d="M0.5 12 V0.5 H12 M11.5 2 V12 M2 11.5 H12" fill="none" stroke="#74879B" stroke-width="1"/></svg>
<div class="a" style="left:0;top:172px;width:1162px;height:19px;background:#fff;border-bottom:1px solid #C27A45"></div>
<div class="a" style="left:14px;top:172px;width:1px;height:19px;background:#C27A45"></div>
<div class="a" style="left:29px;top:172px;width:1px;height:19px;background:#C27A45"></div>
<div class="t" style="left:31px;top:175px;letter-spacing:0.12px;">Reserved</div>
<div class="a" style="left:104px;top:172px;width:1px;height:19px;background:#C27A45"></div>
<div class="a" style="left:119px;top:172px;width:1px;height:19px;background:#C27A45"></div>
<div class="a" style="left:139px;top:172px;width:1px;height:19px;background:#C27A45"></div>
<div class="t" style="left:141px;top:175px;">Rent</div>
<div class="a" style="left:184px;top:172px;width:1px;height:19px;background:#C27A45"></div>
<div class="t" style="left:186px;top:175px;letter-spacing:-0.2px;">MOTOM6</div>
<div class="a" style="left:318px;top:172px;width:1px;height:19px;background:#C27A45"></div>
<div class="t" style="left:326px;top:175px;letter-spacing:-0.2px;">MOTOM6</div>
<div class="a" style="left:578px;top:172px;width:1px;height:19px;background:#C27A45"></div>
<div class="t" style="left:581px;top:175px;">1d</div>
<div class="a" style="left:633px;top:172px;width:1px;height:19px;background:#C27A45"></div>
<div class="t" style="left:633px;top:175px;width:28px;text-align:right">5.00</div>
<div class="a" style="left:663px;top:172px;width:1px;height:19px;background:#C27A45"></div>
<div class="t" style="left:663px;top:175px;width:48px;text-align:right">10.00</div>
<div class="a" style="left:713px;top:172px;width:1px;height:19px;background:#C27A45"></div>
<div class="t" style="left:713px;top:175px;width:73px;text-align:right">0.00</div>
<div class="a" style="left:788px;top:172px;width:1px;height:19px;background:#C27A45"></div>
<div class="t" style="left:788px;top:175px;width:28px;text-align:right">1</div>
<div class="a" style="left:818px;top:172px;width:1px;height:19px;background:#C27A45"></div>
<div class="t" style="left:818px;top:175px;width:58px;text-align:right">0.00</div>
<div class="a" style="left:878px;top:172px;width:1px;height:19px;background:#C27A45"></div>
<div class="t" style="left:878px;top:175px;width:53px;text-align:right">0.00</div>
<div class="a" style="left:933px;top:172px;width:1px;height:19px;background:#C27A45"></div>
<div class="t" style="left:933px;top:175px;width:58px;text-align:right">0.00</div>
<div class="a" style="left:993px;top:172px;width:1px;height:19px;background:#C27A45"></div>
<div class="t" style="left:993px;top:175px;width:58px;text-align:right">0.00</div>
<div class="a" style="left:1053px;top:172px;width:1px;height:19px;background:#C27A45"></div>
<div class="t" style="left:1053px;top:175px;width:73px;text-align:right">0.00</div>
<div class="a" style="left:1128px;top:172px;width:1px;height:19px;background:#C27A45"></div>
<div class="t" style="left:1130px;top:175px;">Day</div>
<svg class="a" style="left:1px;top:175px" width="13" height="13"><rect x="1" y="1" width="12" height="12" fill="#fff"/><rect x="2" y="2" width="9" height="9" fill="url(#cbg)"/><path d="M0.5 12 V0.5 H12 M11.5 2 V12 M2 11.5 H12" fill="none" stroke="#74879B" stroke-width="1"/><path d="M3.8 5 V9.6 L9.7 3.2" fill="none" stroke="#141414" stroke-width="1.8"/></svg>
<svg class="a" style="left:16px;top:175px" width="13" height="13"><rect x="1" y="1" width="12" height="12" fill="#fff"/><rect x="2" y="2" width="9" height="9" fill="url(#cbg)"/><path d="M0.5 12 V0.5 H12 M11.5 2 V12 M2 11.5 H12" fill="none" stroke="#74879B" stroke-width="1"/></svg>
<svg class="a" style="left:106px;top:175px" width="13" height="13"><rect x="1" y="1" width="12" height="12" fill="#fff"/><rect x="2" y="2" width="9" height="9" fill="url(#cbg)"/><path d="M0.5 12 V0.5 H12 M11.5 2 V12 M2 11.5 H12" fill="none" stroke="#74879B" stroke-width="1"/></svg>
<svg class="a" style="left:123px;top:175px" width="13" height="13"><rect x="1" y="1" width="12" height="12" fill="#fff"/><rect x="2" y="2" width="9" height="9" fill="url(#cbg)"/><path d="M0.5 12 V0.5 H12 M11.5 2 V12 M2 11.5 H12" fill="none" stroke="#74879B" stroke-width="1"/></svg>
<div class="a" style="left:0;top:191px;width:1162px;height:19px;background:#fff;border-bottom:1px solid #C27A45"></div>
<div class="a" style="left:14px;top:191px;width:1px;height:19px;background:#C27A45"></div>
<div class="a" style="left:29px;top:191px;width:1px;height:19px;background:#C27A45"></div>
<div class="t" style="left:31px;top:194px;letter-spacing:0.12px;">Reserved</div>
<div class="a" style="left:104px;top:191px;width:1px;height:19px;background:#C27A45"></div>
<div class="a" style="left:119px;top:191px;width:1px;height:19px;background:#C27A45"></div>
<div class="a" style="left:139px;top:191px;width:1px;height:19px;background:#C27A45"></div>
<div class="t" style="left:141px;top:194px;">Rent</div>
<div class="a" style="left:184px;top:191px;width:1px;height:19px;background:#C27A45"></div>
<div class="t" style="left:186px;top:194px;letter-spacing:-0.2px;">MOTOX</div>
<div class="a" style="left:318px;top:191px;width:1px;height:19px;background:#C27A45"></div>
<div class="t" style="left:326px;top:194px;letter-spacing:-0.2px;">MOTOX</div>
<div class="a" style="left:578px;top:191px;width:1px;height:19px;background:#C27A45"></div>
<div class="t" style="left:581px;top:194px;">1d</div>
<div class="a" style="left:633px;top:191px;width:1px;height:19px;background:#C27A45"></div>
<div class="t" style="left:633px;top:194px;width:28px;text-align:right">5.00</div>
<div class="a" style="left:663px;top:191px;width:1px;height:19px;background:#C27A45"></div>
<div class="t" style="left:663px;top:194px;width:48px;text-align:right">10.00</div>
<div class="a" style="left:713px;top:191px;width:1px;height:19px;background:#C27A45"></div>
<div class="t" style="left:713px;top:194px;width:73px;text-align:right">0.00</div>
<div class="a" style="left:788px;top:191px;width:1px;height:19px;background:#C27A45"></div>
<div class="t" style="left:788px;top:194px;width:28px;text-align:right">1</div>
<div class="a" style="left:818px;top:191px;width:1px;height:19px;background:#C27A45"></div>
<div class="t" style="left:818px;top:194px;width:58px;text-align:right">200.00</div>
<div class="a" style="left:878px;top:191px;width:1px;height:19px;background:#C27A45"></div>
<div class="t" style="left:878px;top:194px;width:53px;text-align:right">0.00</div>
<div class="a" style="left:933px;top:191px;width:1px;height:19px;background:#C27A45"></div>
<div class="t" style="left:933px;top:194px;width:58px;text-align:right">0.00</div>
<div class="a" style="left:993px;top:191px;width:1px;height:19px;background:#C27A45"></div>
<div class="t" style="left:993px;top:194px;width:58px;text-align:right">0.00</div>
<div class="a" style="left:1053px;top:191px;width:1px;height:19px;background:#C27A45"></div>
<div class="t" style="left:1053px;top:194px;width:73px;text-align:right">0.00</div>
<div class="a" style="left:1128px;top:191px;width:1px;height:19px;background:#C27A45"></div>
<div class="t" style="left:1130px;top:194px;">Day</div>
<svg class="a" style="left:1px;top:194px" width="13" height="13"><rect x="1" y="1" width="12" height="12" fill="#fff"/><rect x="2" y="2" width="9" height="9" fill="url(#cbg)"/><path d="M0.5 12 V0.5 H12 M11.5 2 V12 M2 11.5 H12" fill="none" stroke="#74879B" stroke-width="1"/><path d="M3.8 5 V9.6 L9.7 3.2" fill="none" stroke="#141414" stroke-width="1.8"/></svg>
<svg class="a" style="left:16px;top:194px" width="13" height="13"><rect x="1" y="1" width="12" height="12" fill="#fff"/><rect x="2" y="2" width="9" height="9" fill="url(#cbg)"/><path d="M0.5 12 V0.5 H12 M11.5 2 V12 M2 11.5 H12" fill="none" stroke="#74879B" stroke-width="1"/><path d="M3.8 5 V9.6 L9.7 3.2" fill="none" stroke="#141414" stroke-width="1.8"/></svg>
<svg class="a" style="left:106px;top:194px" width="13" height="13"><rect x="1" y="1" width="12" height="12" fill="#fff"/><rect x="2" y="2" width="9" height="9" fill="url(#cbg)"/><path d="M0.5 12 V0.5 H12 M11.5 2 V12 M2 11.5 H12" fill="none" stroke="#74879B" stroke-width="1"/></svg>
<svg class="a" style="left:123px;top:194px" width="13" height="13"><rect x="1" y="1" width="12" height="12" fill="#fff"/><rect x="2" y="2" width="9" height="9" fill="url(#cbg)"/><path d="M0.5 12 V0.5 H12 M11.5 2 V12 M2 11.5 H12" fill="none" stroke="#74879B" stroke-width="1"/></svg>
</div>
<div class="a" style="left:727px;top:383px;width:74px;height:18px;border:1px solid #E8201A"></div>
<div class="a" style="left:192px;top:379px;width:156px;height:200px;border:2px solid #B40D0D"></div>
<div class="a" style="left:13px;top:647px;width:1160px;height:17px;background:#EEEEEE;border-top:1px solid #7A8A9A;border-bottom:1px solid #C8DDF2;box-shadow:inset 0 1px 0 #C8DDF2,inset 0 -1px 0 #7A8A9A"></div>
<div class="a" style="left:13px;top:648px;width:15px;height:14px;background:#EEEEEE;border-left:2px solid #fff;border-top:1px solid #fff"></div>
<div class="a" style="left:13px;top:662px;width:15px;height:1px;background:#7A8A9A"></div>
<svg class="a" style="left:18px;top:652px" width="6" height="9"><path d="M5 0 V8 L0.8 4Z" fill="#222"/></svg>
<div class="a" style="left:28px;top:647px;width:421px;height:16px;border:1px solid #FFBE00;box-shadow:inset 0 1px 0 #F8B040;background:linear-gradient(165deg,#F2C8A6 0%,#EBB088 45%,#E4965E 100%)"></div>
<div class="a" style="left:1156px;top:647px;width:17px;height:16px;background:#EEEEEE;border:1px solid #7A8A9A;border-right:none;box-shadow:inset 1px 1px 0 #fff"></div>
<svg class="a" style="left:1163px;top:652px" width="6" height="9"><path d="M0.5 0 V8 L4.7 4Z" fill="#222"/></svg>
<div class="a" style="left:236px;top:651px;width:5px;height:8px;border-left:1px solid #A0A0A0;border-right:1px solid #A0A0A0"><div class="a" style="left:1px;top:0;width:1px;height:8px;background:#A0A0A0"></div></div>
<div class="t" style="left:70px;top:678px;font-size:14px;line-height:16px;font-weight:bold;color:#222">Items</div>
<div class="t" style="left:235px;top:678px;font-size:14px;line-height:16px;font-weight:bold;color:#222">Labor</div>
<div class="t" style="left:446px;top:678px;font-size:14px;line-height:16px;font-weight:bold;color:#222">Sub Total</div>
<div class="t" style="left:636px;top:678px;font-size:14px;line-height:16px;font-weight:bold;color:#222">Tax</div>
<div class="fld" style="left:120px;top:673px;width:100px;height:24px"></div>
<div class="fld" style="left:287px;top:673px;width:100px;height:24px"></div>
<div class="fld" style="left:525px;top:673px;width:100px;height:24px"></div>
<div class="fld" style="left:670px;top:673px;width:100px;height:24px"></div>
<div class="a" style="left:813px;top:673px;width:89px;height:23px;border:1px solid #C8C8C8"></div>
<div class="t" style="left:842px;top:678px;font-size:14px;line-height:16px;font-weight:bold;color:#222">Total</div>
<div class="fld" style="left:906px;top:673px;width:100px;height:24px"></div>
<div class="t" style="left:908px;top:677px;font-size:14px;line-height:16px;font-weight:bold;color:#111">0.00</div>
<div class="a" style="left:8px;top:707px;width:1172px;height:25px;background:#fff;border-top:2px solid #A8A8A8"></div>
<div class="a" style="left:9px;top:708px;width:1170px;height:23px;border:1px solid #C0C0C0;border-top:none;border-left:2px solid #A8A8A8"></div>
</body></html>
